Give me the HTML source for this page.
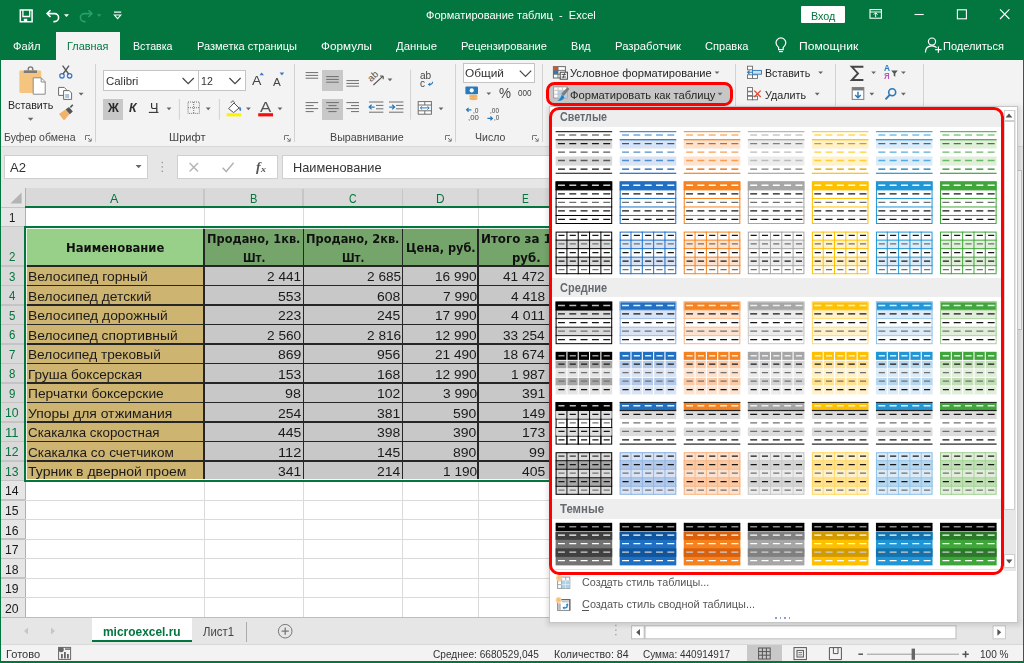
<!DOCTYPE html><html lang="ru"><head><meta charset="utf-8"><title>Форматирование таблиц - Excel</title>
<style>

html,body{margin:0;padding:0;}
body{width:1024px;height:663px;overflow:hidden;background:#fff;position:relative;font-family:"Liberation Sans",sans-serif;}
.a{position:absolute;box-sizing:border-box;}
.t{position:absolute;white-space:pre;transform-origin:0 50%;display:block;}
svg{overflow:visible;}

#t0{left:426.00px;transform:scaleX(0.9692);}
#t1{left:811.30px;transform:scaleX(0.9143);}
#t2{left:12.50px;transform:scaleX(0.9644);}
#t3{left:66.50px;transform:scaleX(0.9402);}
#t4{left:132.50px;transform:scaleX(0.9166);}
#t5{left:196.50px;transform:scaleX(0.9507);}
#t6{left:321.00px;transform:scaleX(1.0108);}
#t7{left:396.00px;transform:scaleX(0.9787);}
#t8{left:461.00px;transform:scaleX(0.9606);}
#t9{left:571.00px;transform:scaleX(0.9293);}
#t10{left:614.50px;transform:scaleX(0.9762);}
#t11{left:704.50px;transform:scaleX(0.9564);}
#t12{left:798.80px;transform:scaleX(1.0440);}
#t13{left:942.50px;transform:scaleX(0.9527);}
#t14{left:4.00px;transform:scaleX(0.9404);}
#t15{left:169.00px;transform:scaleX(0.9915);}
#t16{left:329.50px;transform:scaleX(0.9582);}
#t17{left:475.00px;transform:scaleX(0.9414);}
#t18{left:8.30px;transform:scaleX(0.9195);}
#t19{left:105.70px;transform:scaleX(0.9860);}
#t20{left:200.80px;transform:scaleX(0.9143);}
#t21{left:108.00px;transform:scaleX(0.9640);}
#t22{left:129.20px;transform:scaleX(0.9967);}
#t23{left:149.60px;transform:scaleX(1.0163);}
#t24{left:251.80px;transform:scaleX(1.0355);}
#t25{left:273.40px;transform:scaleX(1.0251);}
#t26{left:260.20px;transform:scaleX(1.1655);}
#t27{left:419.60px;transform:scaleX(0.9873);}
#t28{left:420.00px;transform:scaleX(0.9816);}
#t29{left:465.10px;transform:scaleX(1.0221);}
#t30{left:498.60px;transform:scaleX(0.9242);}
#t31{left:518.00px;transform:scaleX(0.9481);}
#t32{left:473.40px;transform:scaleX(0.8393);}
#t33{left:468.20px;transform:scaleX(0.9708);}
#t34{left:490.40px;transform:scaleX(0.8090);}
#t35{left:494.20px;transform:scaleX(0.7794);}
#t36{left:570.30px;transform:scaleX(0.9614);}
#t37{left:570.30px;transform:scaleX(0.9639);}
#t38{left:764.90px;transform:scaleX(0.9195);}
#t39{left:764.90px;transform:scaleX(0.9262);}
#t40{left:883.60px;transform:scaleX(0.9435);}
#t41{left:883.80px;transform:scaleX(0.8849);}
#t42{left:9.50px;transform:scaleX(1.0557);}
#t43{left:292.50px;transform:scaleX(1.0314);}
#t44{left:256.20px;transform:scaleX(1.1109);}
#t45{left:261.00px;transform:scaleX(1.1111);}
#t46{left:110.40px;transform:scaleX(0.9993);}
#t47{left:249.90px;transform:scaleX(0.8803);}
#t48{left:349.00px;transform:scaleX(0.8343);}
#t49{left:435.90px;transform:scaleX(0.9441);}
#t50{left:521.80px;transform:scaleX(0.8089);}
#t51{left:9.00px;transform:scaleX(0.8715);}
#t52{left:9.00px;transform:scaleX(0.8715);}
#t53{left:9.00px;transform:scaleX(0.8715);}
#t54{left:9.00px;transform:scaleX(0.8715);}
#t55{left:9.00px;transform:scaleX(0.8715);}
#t56{left:9.00px;transform:scaleX(0.8715);}
#t57{left:9.00px;transform:scaleX(0.8715);}
#t58{left:9.00px;transform:scaleX(0.8715);}
#t59{left:9.00px;transform:scaleX(0.8715);}
#t60{left:5.40px;transform:scaleX(0.9269);}
#t61{left:5.40px;transform:scaleX(0.9925);}
#t62{left:5.40px;transform:scaleX(0.9269);}
#t63{left:5.40px;transform:scaleX(0.9269);}
#t64{left:5.40px;transform:scaleX(0.9269);}
#t65{left:5.40px;transform:scaleX(0.9269);}
#t66{left:5.40px;transform:scaleX(0.9269);}
#t67{left:5.40px;transform:scaleX(0.9269);}
#t68{left:5.40px;transform:scaleX(0.9269);}
#t69{left:5.40px;transform:scaleX(0.9269);}
#t70{left:5.40px;transform:scaleX(0.9269);}
#t71{left:65.90px;transform:scaleX(0.9539);}
#t72{left:206.70px;transform:scaleX(0.9328);}
#t73{left:242.50px;transform:scaleX(0.8374);}
#t74{left:306.30px;transform:scaleX(0.9328);}
#t75{left:341.90px;transform:scaleX(0.8374);}
#t76{left:405.90px;transform:scaleX(0.9292);}
#t77{left:480.90px;transform:scaleX(0.9757);}
#t78{left:511.50px;transform:scaleX(0.9593);}
#t79{left:27.70px;transform:scaleX(1.0222);}
#t80{left:267.10px;transform:scaleX(1.0050);}
#t81{left:366.50px;transform:scaleX(1.0050);}
#t82{left:435.05px;transform:scaleX(1.0017);}
#t83{left:503.45px;transform:scaleX(1.0017);}
#t84{left:27.70px;transform:scaleX(1.0165);}
#t85{left:277.95px;transform:scaleX(1.0292);}
#t86{left:377.35px;transform:scaleX(1.0292);}
#t87{left:442.50px;transform:scaleX(1.0050);}
#t88{left:510.90px;transform:scaleX(1.0050);}
#t89{left:27.70px;transform:scaleX(1.0207);}
#t90{left:277.95px;transform:scaleX(1.0292);}
#t91{left:377.35px;transform:scaleX(1.0292);}
#t92{left:435.05px;transform:scaleX(1.0017);}
#t93{left:510.90px;transform:scaleX(1.0359);}
#t94{left:27.70px;transform:scaleX(1.0147);}
#t95{left:267.10px;transform:scaleX(1.0050);}
#t96{left:366.50px;transform:scaleX(1.0050);}
#t97{left:435.05px;transform:scaleX(1.0017);}
#t98{left:503.45px;transform:scaleX(1.0017);}
#t99{left:27.70px;transform:scaleX(1.0050);}
#t100{left:277.95px;transform:scaleX(1.0292);}
#t101{left:377.35px;transform:scaleX(1.0292);}
#t102{left:435.05px;transform:scaleX(1.0017);}
#t103{left:503.45px;transform:scaleX(1.0017);}
#t104{left:27.70px;transform:scaleX(0.9985);}
#t105{left:277.95px;transform:scaleX(1.0292);}
#t106{left:377.35px;transform:scaleX(1.0292);}
#t107{left:435.05px;transform:scaleX(1.0017);}
#t108{left:510.90px;transform:scaleX(1.0050);}
#t109{left:27.70px;transform:scaleX(1.0153);}
#t110{left:285.40px;transform:scaleX(1.0512);}
#t111{left:377.35px;transform:scaleX(1.0292);}
#t112{left:442.50px;transform:scaleX(1.0050);}
#t113{left:521.75px;transform:scaleX(1.0292);}
#t114{left:27.70px;transform:scaleX(1.0222);}
#t115{left:277.95px;transform:scaleX(1.0292);}
#t116{left:377.35px;transform:scaleX(1.0292);}
#t117{left:453.35px;transform:scaleX(1.0292);}
#t118{left:521.75px;transform:scaleX(1.0292);}
#t119{left:27.70px;transform:scaleX(0.9822);}
#t120{left:277.95px;transform:scaleX(1.0292);}
#t121{left:377.35px;transform:scaleX(1.0292);}
#t122{left:453.35px;transform:scaleX(1.0292);}
#t123{left:521.75px;transform:scaleX(1.0292);}
#t124{left:27.70px;transform:scaleX(0.9987);}
#t125{left:277.95px;transform:scaleX(1.0774);}
#t126{left:377.35px;transform:scaleX(1.0292);}
#t127{left:453.35px;transform:scaleX(1.0292);}
#t128{left:529.20px;transform:scaleX(1.0512);}
#t129{left:27.70px;transform:scaleX(1.0318);}
#t130{left:277.95px;transform:scaleX(1.0292);}
#t131{left:377.35px;transform:scaleX(1.0292);}
#t132{left:442.50px;transform:scaleX(1.0050);}
#t133{left:521.75px;transform:scaleX(1.0292);}
#t134{left:102.50px;transform:scaleX(0.9474);}
#t135{left:203.30px;transform:scaleX(0.9319);}
#t136{left:6.30px;transform:scaleX(0.9900);}
#t137{left:433.10px;transform:scaleX(0.9044);}
#t138{left:553.50px;transform:scaleX(0.9473);}
#t139{left:642.50px;transform:scaleX(0.8935);}
#t140{left:979.50px;transform:scaleX(0.9012);}
#t141{left:560.10px;transform:scaleX(0.8923);}
#t142{left:559.90px;transform:scaleX(0.9148);}
#t143{left:560.30px;transform:scaleX(0.9504);}
#t144{left:581.50px;transform:scaleX(0.9484);}
#t145{left:581.50px;transform:scaleX(0.9578);}
</style></head><body>
<div class="a " style="left:0.00px;top:0.00px;width:1024.00px;height:59.70px;background:#03763f;"></div>
<div class="a " style="left:0.00px;top:59.70px;width:1024.00px;height:86.00px;background:#f3f3f3;"></div>
<div class="a " style="left:0.00px;top:145.50px;width:1024.00px;height:1.00px;background:#d6d6d6;"></div>
<div class="a " style="left:0.00px;top:146.50px;width:1024.00px;height:41.70px;background:#e6e6e6;"></div>
<svg class="a" style="left:0.00px;top:0.00px;" width="140" height="32" viewBox="0 0 140 32">
<g fill="none" stroke="#fff" stroke-width="1.5">
<path d="M20.300 10h11.800v11.800h-11.800z"/><path d="M22.900 10v6.500h6.800v-6.500" stroke-width="1.300"/>
<path d="M50.500 10.200l-3.400 3.400 3.400 3.400" stroke-width="1.600"/><path d="M47.400 13.600h7.200a4 4 0 0 1 0 8h-1.200" stroke-width="1.600"/>
<g stroke="#27a06c"><path d="M88.500 10.200l3.400 3.400-3.400 3.400" stroke-width="1.600"/><path d="M91.600 13.600h-7.200a4 4 0 0 0 0 8h1.200" stroke-width="1.600"/></g>
<path d="M114 12.100h7.200" stroke-width="1.200"/>
</g>
<rect x="23.800" y="18.800" width="3.400" height="2.800" fill="#fff"/>
<path d="M64 14.200h5l-2.500 2.800z" fill="#fff"/><path d="M97 14.200h4.400l-2.200 2.600z" fill="#27a06c"/>
<path d="M114.400 15h6.400l-3.200 3.600z" fill="none" stroke="#fff" stroke-width="1.100"/>
</svg>
<span class="t" id="t0" style="top:9.46px;font-size:11.4px;line-height:13.68px;color:#fff;font-family:'Liberation Sans', sans-serif;font-weight:normal;">Форматирование таблиц  -  Excel</span>
<div class="a " style="left:801.00px;top:6.00px;width:44.00px;height:17.20px;background:#fff;border-radius:1px;"></div>
<span class="t" id="t1" style="top:8.52px;font-size:11.8px;line-height:14.16px;color:#03763f;font-family:'Liberation Sans', sans-serif;font-weight:normal;">Вход</span>
<svg class="a" style="left:860.00px;top:0.00px;" width="164" height="32" viewBox="0 0 164 32">
<g fill="none" stroke="#fff" stroke-width="1.1">
<rect x="10" y="9.6" width="11.4" height="8.6"/><path d="M10 12h11.4M15.7 17v-4M13.8 14.6l1.9-1.9 1.9 1.9" stroke-width="1"/>
<path d="M54.5 14.5h9.2"/>
<rect x="97.4" y="9.8" width="9" height="9"/>
<path d="M140 9.4l9.4 9.6M149.4 9.4L140 19"/>
</g>
</svg>
<div class="a " style="left:55.70px;top:31.70px;width:64.10px;height:28.20px;background:#f3f3f3;"></div>
<span class="t" id="t2" style="top:38.84px;font-size:11.6px;line-height:13.92px;color:#fff;font-family:'Liberation Sans', sans-serif;font-weight:normal;">Файл</span>
<span class="t" id="t3" style="top:38.84px;font-size:11.6px;line-height:13.92px;color:#03763f;font-family:'Liberation Sans', sans-serif;font-weight:normal;">Главная</span>
<span class="t" id="t4" style="top:38.84px;font-size:11.6px;line-height:13.92px;color:#fff;font-family:'Liberation Sans', sans-serif;font-weight:normal;">Вставка</span>
<span class="t" id="t5" style="top:38.84px;font-size:11.6px;line-height:13.92px;color:#fff;font-family:'Liberation Sans', sans-serif;font-weight:normal;">Разметка страницы</span>
<span class="t" id="t6" style="top:38.84px;font-size:11.6px;line-height:13.92px;color:#fff;font-family:'Liberation Sans', sans-serif;font-weight:normal;">Формулы</span>
<span class="t" id="t7" style="top:38.84px;font-size:11.6px;line-height:13.92px;color:#fff;font-family:'Liberation Sans', sans-serif;font-weight:normal;">Данные</span>
<span class="t" id="t8" style="top:38.84px;font-size:11.6px;line-height:13.92px;color:#fff;font-family:'Liberation Sans', sans-serif;font-weight:normal;">Рецензирование</span>
<span class="t" id="t9" style="top:38.84px;font-size:11.6px;line-height:13.92px;color:#fff;font-family:'Liberation Sans', sans-serif;font-weight:normal;">Вид</span>
<span class="t" id="t10" style="top:38.84px;font-size:11.6px;line-height:13.92px;color:#fff;font-family:'Liberation Sans', sans-serif;font-weight:normal;">Разработчик</span>
<span class="t" id="t11" style="top:38.84px;font-size:11.6px;line-height:13.92px;color:#fff;font-family:'Liberation Sans', sans-serif;font-weight:normal;">Справка</span>
<span class="t" id="t12" style="top:38.84px;font-size:11.6px;line-height:13.92px;color:#fff;font-family:'Liberation Sans', sans-serif;font-weight:normal;">Помощник</span>
<span class="t" id="t13" style="top:38.84px;font-size:11.6px;line-height:13.92px;color:#fff;font-family:'Liberation Sans', sans-serif;font-weight:normal;">Поделиться</span>
<svg class="a" style="left:770.00px;top:32.00px;" width="250" height="28" viewBox="0 0 250 28">
<g fill="none" stroke="#fff" stroke-width="1.2">
<path d="M8.6 15.4c-1.6-1.2-2.6-2.6-2.6-4.6a4.9 4.9 0 0 1 9.8 0c0 2-1 3.4-2.6 4.6v2.2H8.6z"/><path d="M9 19.6h3.8"/>
<circle cx="162" cy="9.6" r="3.6"/><path d="M155.4 20.4c0-4 2.6-6.6 6.6-6.6 2 0 3.4.6 4.6 1.8"/><path d="M168.4 14.4v6.4M165.2 17.6h6.4"/>
</g>
</svg>
<div class="a " style="left:95.00px;top:63.50px;width:1.00px;height:78.00px;background:#d2d2d2;"></div>
<div class="a " style="left:294.40px;top:63.50px;width:1.00px;height:78.00px;background:#d2d2d2;"></div>
<div class="a " style="left:454.60px;top:63.50px;width:1.00px;height:78.00px;background:#d2d2d2;"></div>
<div class="a " style="left:541.80px;top:63.50px;width:1.00px;height:78.00px;background:#d2d2d2;"></div>
<div class="a " style="left:734.60px;top:63.50px;width:1.00px;height:78.00px;background:#d2d2d2;"></div>
<div class="a " style="left:834.60px;top:63.50px;width:1.00px;height:78.00px;background:#d2d2d2;"></div>
<div class="a " style="left:923.40px;top:63.50px;width:1.00px;height:78.00px;background:#d2d2d2;"></div>
<span class="t" id="t14" style="top:130.88px;font-size:11.2px;line-height:13.44px;color:#444;font-family:'Liberation Sans', sans-serif;font-weight:normal;">Буфер обмена</span>
<span class="t" id="t15" style="top:130.88px;font-size:11.2px;line-height:13.44px;color:#444;font-family:'Liberation Sans', sans-serif;font-weight:normal;">Шрифт</span>
<span class="t" id="t16" style="top:130.88px;font-size:11.2px;line-height:13.44px;color:#444;font-family:'Liberation Sans', sans-serif;font-weight:normal;">Выравнивание</span>
<span class="t" id="t17" style="top:130.88px;font-size:11.2px;line-height:13.44px;color:#444;font-family:'Liberation Sans', sans-serif;font-weight:normal;">Число</span>
<svg class="a" style="left:84.50px;top:134.50px;" width="7" height="7" viewBox="0 0 7 7">
<path d="M.5 5V.5H5M3 3l3 3M6.2 3.4v2.8H3.4" fill="none" stroke="#777" stroke-width="1"/>
</svg>
<svg class="a" style="left:284.00px;top:134.50px;" width="7" height="7" viewBox="0 0 7 7">
<path d="M.5 5V.5H5M3 3l3 3M6.2 3.4v2.8H3.4" fill="none" stroke="#777" stroke-width="1"/>
</svg>
<svg class="a" style="left:444.50px;top:134.50px;" width="7" height="7" viewBox="0 0 7 7">
<path d="M.5 5V.5H5M3 3l3 3M6.2 3.4v2.8H3.4" fill="none" stroke="#777" stroke-width="1"/>
</svg>
<svg class="a" style="left:531.50px;top:134.50px;" width="7" height="7" viewBox="0 0 7 7">
<path d="M.5 5V.5H5M3 3l3 3M6.2 3.4v2.8H3.4" fill="none" stroke="#777" stroke-width="1"/>
</svg>
<svg class="a" style="left:0.00px;top:60.00px;" width="95" height="80" viewBox="0 0 95 80">
<rect x="19.400" y="10.400" width="21.800" height="22.600" rx="1.400" fill="#f5c47f"/>
<rect x="23.800" y="10.400" width="13.200" height="2.600" fill="#7a7a7a"/><path d="M28.200 10.600v-1.400a2.300 2.300 0 0 1 4.600 0v1.400" fill="none" stroke="#7a7a7a" stroke-width="1.400"/>
<path d="M33.200 17.800h8l4 4v12.400h-12z" fill="#fff" stroke="#8a8a8a" stroke-width="1"/>
<path d="M41.200 18v4h4" fill="none" stroke="#8a8a8a" stroke-width="1"/>
<path d="M27.800 57.800h5.600l-2.800 3z" fill="#666"/>
<g fill="none" stroke="#3f78c4" stroke-width="1.3"><circle cx="62" cy="15.8" r="2.2"/><circle cx="69.6" cy="15.8" r="2.2"/></g>
<path d="M62.6 5.6l6 8.4M69 5.6l-6 8.4" stroke="#555" stroke-width="1.3" fill="none"/>
<g fill="#fff" stroke="#6a6a6a" stroke-width="1"><path d="M58.6 27.4h5.6l2 2v6h-7.6z"/><path d="M63.6 30.6h5.6l2.4 2.4v6.4h-8z"/></g>
<path d="M65.2 35h4M65.2 37h4" stroke="#3f78c4" stroke-width="0.9"/>
<path d="M78.6 32.8h5l-2.5 2.8z" fill="#666"/>
<path d="M59 54l6.4-4.4 4 4.6-5.4 6.2z" fill="#f2b366"/><path d="M65.6 49.6l3.4-2.6 3.8 4.4-3 2.8z" fill="#555"/><path d="M70.4 47.4l2.4-2.6" stroke="#555" stroke-width="1.6"/>
</svg>
<span class="t" id="t18" style="top:98.04px;font-size:11.6px;line-height:13.92px;color:#262626;font-family:'Liberation Sans', sans-serif;font-weight:normal;">Вставить</span>
<div class="a " style="left:103.00px;top:70.00px;width:95.80px;height:20.60px;background:#fff;border:1px solid #c4c4c4;"></div>
<div class="a " style="left:198.20px;top:70.00px;width:47.60px;height:20.60px;background:#fff;border:1px solid #c4c4c4;"></div>
<span class="t" id="t19" style="top:73.64px;font-size:11.6px;line-height:13.92px;color:#333;font-family:'Liberation Sans', sans-serif;font-weight:normal;">Calibri</span>
<span class="t" id="t20" style="top:73.64px;font-size:11.6px;line-height:13.92px;color:#333;font-family:'Liberation Sans', sans-serif;font-weight:normal;">12</span>
<div class="a " style="left:103.00px;top:98.60px;width:20.20px;height:21.00px;background:#c8c8c8;"></div>
<span class="t" id="t21" style="top:101.16px;font-size:12.4px;line-height:14.88px;color:#262626;font-family:'Liberation Sans', sans-serif;font-weight:bold;">Ж</span>
<span class="t" id="t22" style="top:101.16px;font-size:12.4px;line-height:14.88px;color:#333;font-family:'Liberation Sans', sans-serif;font-weight:bold;font-style:italic;">К</span>
<span class="t" id="t23" style="top:100.76px;font-size:12.4px;line-height:14.88px;color:#333;font-family:'Liberation Sans', sans-serif;font-weight:normal;">Ч</span>
<svg class="a" style="left:100.00px;top:60.00px;" width="200" height="80" viewBox="0 0 200 80">
<g fill="none" stroke="#444" stroke-width="1.2"><path d="M82.6 18l5.6 5.6 5.6-5.6"/><path d="M129.4 18l5.6 5.6 5.6-5.6"/></g>
<path d="M48.8 52.4h9.6" stroke="#333" stroke-width="1.1"/>
<path d="M66.6 47.6h4.8l-2.4 2.6z" fill="#666"/>
<path d="M79.4 39v20.6" stroke="#d2d2d2" stroke-width="1"/>
<g stroke="#777" stroke-width="1" fill="none" stroke-dasharray="1 1"><rect x="88" y="42" width="11.4" height="11.4"/><path d="M93.7 42v11.4M88 47.7h11.4"/></g>
<path d="M105.8 47.6h4.8l-2.4 2.6z" fill="#666"/>
<path d="M119.4 39v20.6" stroke="#d2d2d2" stroke-width="1"/>
<path d="M128.6 48.6l5.4-5.6 5 5-5.4 4.6z" fill="#fff" stroke="#555" stroke-width="1"/><path d="M131 42.8c.6-2.4 3.6-2.4 3.4.6" fill="none" stroke="#555" stroke-width="1"/>
<path d="M139.6 46.4c1.6 1.4 2.2 3 1 4.6-1.4-.4-2-2.6-1-4.6z" fill="#3f78c4"/>
<rect x="126.6" y="53.2" width="14.6" height="3.2" fill="#fff200"/>
<path d="M146 47.6h4.8l-2.4 2.6z" fill="#666"/>
<rect x="158.2" y="53.2" width="14.8" height="3.2" fill="#f80d0d"/>
<path d="M177.6 47.6h4.8l-2.4 2.6z" fill="#666"/>
<path d="M159.400 15.200l2.300-2.800 2.300 2.800z" fill="#3f78c4"/>
<path d="M179.600 12.600h4.600l-2.300 2.800z" fill="#3f78c4"/>
</svg>
<span class="t" id="t24" style="top:73.44px;font-size:13.6px;line-height:16.32px;color:#444;font-family:'Liberation Sans', sans-serif;font-weight:normal;">A</span>
<span class="t" id="t25" style="top:75.76px;font-size:11.4px;line-height:13.68px;color:#444;font-family:'Liberation Sans', sans-serif;font-weight:normal;">A</span>
<span class="t" id="t26" style="top:98.76px;font-size:14.4px;line-height:17.28px;color:#555;font-family:'Liberation Sans', sans-serif;font-weight:normal;">A</span>
<div class="a " style="left:322.40px;top:69.60px;width:20.20px;height:21.00px;background:#c8c8c8;"></div>
<div class="a " style="left:322.40px;top:98.60px;width:20.20px;height:21.00px;background:#c8c8c8;"></div>
<svg class="a" style="left:300.00px;top:60.00px;" width="160" height="80" viewBox="0 0 160 80">
<g stroke="#6e6e6e" stroke-width="1" fill="none">
<path d="M5.600 12.600h12.600M5.600 15.400h12.600M5.600 18.200h12.600"/>
<path d="M26.200 16.600h12.600M26.200 19.400h12.600M26.200 22.200h12.600"/>
<path d="M46.400 20.600h12.600M46.400 23.400h12.600M46.400 26.200h12.600"/>
<path d="M5.600 42.600h12.600M5.600 45.600h8M5.600 48.600h12.600M5.600 51.600h8"/>
<path d="M26.200 42.600h12.600M28.400 45.600h8.200M26.200 48.600h12.600M28.400 51.600h8.200"/>
<path d="M46.400 42.600h12.600M51 45.600h8M46.400 48.600h12.600M51 51.600h8"/>
<path d="M69 42h14.400M76 45.400h7.400M76 48.800h7.400M69 52.200h14.400"/>
<path d="M89 42h14.400M96 45.400h7.400M96 48.800h7.400M89 52.200h14.400"/>
</g>
<g stroke="#2a7ab9" stroke-width="1.3" fill="none"><path d="M74.600 47.100h-5.200M71.600 44.800l-2.400 2.300 2.400 2.300"/><path d="M89.200 47.100h5.200M92.200 44.800l2.400 2.300-2.400 2.300"/></g>
<text x="71" y="22.200" font-family="Liberation Sans, sans-serif" font-size="9.600" fill="#555" transform="rotate(-42 71 22.200)">ab</text>
<path d="M73.400 25l9.600-8.800M83.200 16v3.200M83.200 16h-3.200" stroke="#555" stroke-width="1.100" fill="none"/>
<path d="M87.600 18.600h4.800l-2.400 2.600z" fill="#666"/>
<path d="M110.600 9.600v50" stroke="#d2d2d2" stroke-width="1"/>
<g stroke="#6e6e6e" stroke-width="1" fill="#fff"><rect x="118.200" y="41.600" width="13.200" height="12.600"/><path d="M118.200 45h13.200M118.200 50.800h13.200M124.800 41.600v3.400M124.800 50.800v3.400" fill="none"/></g>
<path d="M120.400 47.900h8.800M122.200 46.200l-1.800 1.700 1.800 1.700M127.400 46.200l1.800 1.700-1.800 1.700" stroke="#2a7ab9" stroke-width="1" fill="none"/>
<path d="M138.600 47.600h4.800l-2.400 2.600z" fill="#666"/>
<path d="M129.400 24.400c2.200.2 3.200-1 3.200-2.600" stroke="#2a7ab9" stroke-width="1.1" fill="none"/><path d="M127.800 24.400l2.400-1.800v3.600z" fill="#2a7ab9"/>
</svg>
<span class="t" id="t27" style="top:70.28px;font-size:10.2px;line-height:12.24px;color:#444;font-family:'Liberation Sans', sans-serif;font-weight:normal;">ab</span>
<span class="t" id="t28" style="top:77.68px;font-size:10.2px;line-height:12.24px;color:#444;font-family:'Liberation Sans', sans-serif;font-weight:normal;">c</span>
<div class="a " style="left:463.20px;top:62.60px;width:71.40px;height:20.60px;background:#fff;border:1px solid #c4c4c4;"></div>
<span class="t" id="t29" style="top:66.44px;font-size:11.6px;line-height:13.92px;color:#333;font-family:'Liberation Sans', sans-serif;font-weight:normal;">Общий</span>
<span class="t" id="t30" style="top:85.44px;font-size:14.6px;line-height:17.52px;color:#444;font-family:'Liberation Sans', sans-serif;font-weight:normal;">%</span>
<span class="t" id="t31" style="top:88.44px;font-size:8.6px;line-height:10.32px;color:#444;font-family:'Liberation Sans', sans-serif;font-weight:normal;">000</span>
<svg class="a" style="left:460.00px;top:60.00px;" width="90" height="80" viewBox="0 0 90 80">
<path d="M59.800 10.600l5.700 5.700 5.700-5.700" fill="none" stroke="#444" stroke-width="1.200"/>
<rect x="5.400" y="26.600" width="12.600" height="7.600" rx="1" fill="#2a7ab9"/><circle cx="11.700" cy="30.400" r="2.100" fill="#fff"/>
<ellipse cx="13.400" cy="36.200" rx="4.200" ry="1.700" fill="#f2b366"/><ellipse cx="13.400" cy="38.600" rx="4.200" ry="1.700" fill="#f2b366"/>
<path d="M26.400 32.400h4.800l-2.400 2.600z" fill="#666"/>
<g stroke="#2a7ab9" stroke-width="1.200" fill="none"><path d="M11.400 49.800h-4.800M8.600 47.900l-2 1.900 2 1.900"/><path d="M27.400 58.400h5M30.400 56.500l2 1.900-2 1.900"/></g>
</svg>
<span class="t" id="t32" style="top:106.40px;font-size:8px;line-height:9.60px;color:#444;font-family:'Liberation Sans', sans-serif;font-weight:normal;">,0</span>
<span class="t" id="t33" style="top:113.40px;font-size:8px;line-height:9.60px;color:#444;font-family:'Liberation Sans', sans-serif;font-weight:normal;">,00</span>
<span class="t" id="t34" style="top:106.40px;font-size:8px;line-height:9.60px;color:#444;font-family:'Liberation Sans', sans-serif;font-weight:normal;">,00</span>
<span class="t" id="t35" style="top:113.40px;font-size:8px;line-height:9.60px;color:#444;font-family:'Liberation Sans', sans-serif;font-weight:normal;">,0</span>
<span class="t" id="t36" style="top:66.24px;font-size:11.6px;line-height:13.92px;color:#262626;font-family:'Liberation Sans', sans-serif;font-weight:normal;">Условное форматирование</span>
<div class="a " style="left:548.40px;top:84.20px;width:182.60px;height:19.20px;background:#c6c6c6;border-radius:5px;"></div>
<span class="t" id="t37" style="top:87.64px;font-size:11.6px;line-height:13.92px;color:#262626;font-family:'Liberation Sans', sans-serif;font-weight:normal;">Форматировать как таблицу</span>
<svg class="a" style="left:545.00px;top:60.00px;" width="200" height="50" viewBox="0 0 200 50">
<rect x="8.400" y="6.600" width="12" height="11.400" fill="#fff" stroke="#6a6a6a" stroke-width="1"/>
<rect x="8.400" y="6.600" width="4.600" height="3.800" fill="#d6552a"/><rect x="8.400" y="10.400" width="4.600" height="3.800" fill="#2a7ab9"/>
<path d="M13 6.600v11.400M8.400 10.400h12M8.400 14.200h12" stroke="#6a6a6a" stroke-width=".9" fill="none"/>
<rect x="15.200" y="12.200" width="7.200" height="7" fill="#fff" stroke="#444" stroke-width="1"/><path d="M16.600 14.400h4.400M16.600 17h4.400M19.600 13.200l-1.600 5" stroke="#444" stroke-width=".9"/>
<path d="M169.600 11.400h4.800l-2.400 2.600z" fill="#666"/>
<rect x="8.600" y="26.800" width="13.400" height="11.200" fill="#fdfdfd" stroke="#9a9a9a" stroke-width="1"/>
<rect x="13" y="30.600" width="8.800" height="7.400" fill="#a9d3f2"/>
<path d="M8.600 30.400h13.400M8.600 34.200h13.400M13 26.800v11.200M17.400 26.800v11.200" stroke="#c2c2c2" stroke-width=".9" fill="none"/>
<path d="M22.600 27.200l1.800 1.800-5.600 7-2.600-2.200z" fill="#7d7d7d"/>
<path d="M12.400 40.400c1.400-.2 2.400-1.400 3.200-3.200l1.200-2.400 2.800 2.400-1.600 2c-1.400 1.400-3.400 1.800-5.600 1.200z" fill="#1f82c8"/>
<path d="M172.600 32.800h4.800l-2.400 2.600z" fill="#666"/>
</svg>
<span class="t" id="t38" style="top:66.24px;font-size:11.6px;line-height:13.92px;color:#262626;font-family:'Liberation Sans', sans-serif;font-weight:normal;">Вставить</span>
<span class="t" id="t39" style="top:87.64px;font-size:11.6px;line-height:13.92px;color:#262626;font-family:'Liberation Sans', sans-serif;font-weight:normal;">Удалить</span>
<svg class="a" style="left:740.00px;top:60.00px;" width="100" height="50" viewBox="0 0 100 50">
<g transform="translate(2.900 0)"><g fill="#fff" stroke="#6a6a6a" stroke-width=".9"><rect x="4.600" y="6.200" width="5" height="3.600"/><rect x="4.600" y="14.800" width="5" height="3.600"/><rect x="9.600" y="14.800" width="5" height="3.600"/><rect x="9.600" y="10.400" width="9" height="3.800" fill="#cfe0f2" stroke="#2a7ab9"/></g>
<path d="M4.600 12.300h4.600M6.600 10.600l-1.900 1.700 1.900 1.700" stroke="#2a7ab9" stroke-width="1.100" fill="none"/>
<g fill="#fff" stroke="#6a6a6a" stroke-width=".9"><rect x="4.600" y="27.600" width="5" height="3.600"/><rect x="4.600" y="36.200" width="5" height="3.600"/><rect x="9.600" y="36.200" width="5" height="3.600"/><rect x="4.600" y="31.800" width="5" height="3.800"/></g>
<path d="M11.400 30.600l6.400 6.400M17.800 30.600l-6.400 6.400" stroke="#e0452c" stroke-width="1.300"/>
</g><path d="M78.200 11.400h4.800l-2.400 2.600z" fill="#666"/><path d="M74.800 32.800h4.800l-2.400 2.600z" fill="#666"/>
</svg>
<svg class="a" style="left:840.00px;top:60.00px;" width="90" height="50" viewBox="0 0 90 50">
<path d="M23.400 6.800h-11.600l6.200 6.600-6.200 6.600h11.600" fill="none" stroke="#444" stroke-width="1.900"/>
<path d="M31.200 11.400h4.800l-2.400 2.600z" fill="#666"/>
<rect x="12.200" y="27.600" width="11.600" height="11.800" fill="#fff" stroke="#7a7a7a" stroke-width="1"/><rect x="12.200" y="27.600" width="11.600" height="2.800" fill="#7a7a7a"/>
<path d="M18 31.800v5.800M15.200 35l2.800 2.800 2.800-2.800" stroke="#2a7ab9" stroke-width="1.500" fill="none"/>
<path d="M29.400 32.800h4.800l-2.400 2.600z" fill="#666"/>
<path d="M51.200 10.600h6.600l-2.500 2.900v3.300l-1.600-1.100v-2.200z" fill="#555"/>
<path d="M61 11.400h4.800l-2.400 2.600z" fill="#666"/>
<circle cx="52.200" cy="32.200" r="3.500" fill="none" stroke="#2a7ab9" stroke-width="1.600"/><path d="M49.700 34.900l-4.200 4.400" stroke="#2a7ab9" stroke-width="1.900"/>
<path d="M61 32.800h4.800l-2.400 2.600z" fill="#666"/>
</svg>
<span class="t" id="t40" style="top:62.52px;font-size:8.8px;line-height:10.56px;color:#2a7ab9;font-family:'Liberation Sans', sans-serif;font-weight:bold;">А</span>
<span class="t" id="t41" style="top:70.92px;font-size:8.8px;line-height:10.56px;color:#b05cb0;font-family:'Liberation Sans', sans-serif;font-weight:bold;">Я</span>
<div class="a " style="left:4.40px;top:155.30px;width:143.80px;height:23.60px;background:#fff;border:1px solid #cfcfcf;"></div>
<div class="a " style="left:176.80px;top:155.30px;width:101.40px;height:23.60px;background:#fff;border:1px solid #cfcfcf;"></div>
<div class="a " style="left:281.60px;top:155.30px;width:742.40px;height:23.60px;background:#fff;border:1px solid #cfcfcf;"></div>
<span class="t" id="t42" style="top:160.76px;font-size:12.4px;line-height:14.88px;color:#333;font-family:'Liberation Sans', sans-serif;font-weight:normal;">A2</span>
<span class="t" id="t43" style="top:160.56px;font-size:12.4px;line-height:14.88px;color:#333;font-family:'Liberation Sans', sans-serif;font-weight:normal;">Наименование</span>
<svg class="a" style="left:130.00px;top:150.00px;" width="160" height="36" viewBox="0 0 160 36">
<path d="M5.600 15h6l-3 3.200z" fill="#666"/>
<g fill="#999"><rect x="31.600" y="11.800" width="1.400" height="1.400"/><rect x="31.600" y="16.200" width="1.400" height="1.400"/><rect x="31.600" y="20.600" width="1.400" height="1.400"/></g>
<path d="M59.600 13l8.400 8.600M68 13l-8.400 8.600" stroke="#b4b4b4" stroke-width="1.400" fill="none"/>
<path d="M92.600 17.800l3.600 3.800 7.400-8.800" stroke="#b4b4b4" stroke-width="1.500" fill="none"/>
</svg>
<span class="t" id="t44" style="top:159.76px;font-size:12.4px;line-height:14.88px;color:#555;font-family:'Liberation Serif', serif;font-weight:bold;font-style:italic;">f</span>
<span class="t" id="t45" style="top:164.00px;font-size:9px;line-height:10.80px;color:#555;font-family:'Liberation Serif', serif;font-weight:bold;font-style:italic;">x</span>
<div class="a " style="left:0.00px;top:188.20px;width:1024.00px;height:19.20px;background:#e6e6e6;"></div>
<div class="a " style="left:25.20px;top:188.20px;width:548.80px;height:19.20px;background:#d9d9d9;"></div>
<div class="a " style="left:0.00px;top:207.40px;width:25.20px;height:409.71px;background:#e6e6e6;"></div>
<div class="a " style="left:0.00px;top:226.91px;width:25.20px;height:253.63px;background:#d9d9d9;"></div>
<svg class="a" style="left:0.00px;top:188.20px;" width="26" height="18" viewBox="0 0 26 18">
<path d="M21.600 4.400v11.200H10.400z" fill="#b4b4b4"/>
</svg>
<div class="a " style="left:203.50px;top:189.20px;width:1.00px;height:427.91px;background:#dadada;"></div>
<div class="a " style="left:302.70px;top:189.20px;width:1.00px;height:427.91px;background:#dadada;"></div>
<div class="a " style="left:402.10px;top:189.20px;width:1.00px;height:427.91px;background:#dadada;"></div>
<div class="a " style="left:477.50px;top:189.20px;width:1.00px;height:427.91px;background:#dadada;"></div>
<div class="a " style="left:573.50px;top:189.20px;width:1.00px;height:427.91px;background:#dadada;"></div>
<div class="a " style="left:24.90px;top:188.20px;width:1.00px;height:428.91px;background:#b0b0b0;"></div>
<div class="a " style="left:0.00px;top:206.90px;width:1024.00px;height:1.00px;background:#c4c4c4;"></div>
<div class="a " style="left:0.00px;top:226.41px;width:1024.00px;height:1.00px;background:#dadada;"></div>
<div class="a " style="left:0.00px;top:265.43px;width:1024.00px;height:1.00px;background:#dadada;"></div>
<div class="a " style="left:0.00px;top:284.94px;width:1024.00px;height:1.00px;background:#dadada;"></div>
<div class="a " style="left:0.00px;top:304.45px;width:1024.00px;height:1.00px;background:#dadada;"></div>
<div class="a " style="left:0.00px;top:323.96px;width:1024.00px;height:1.00px;background:#dadada;"></div>
<div class="a " style="left:0.00px;top:343.47px;width:1024.00px;height:1.00px;background:#dadada;"></div>
<div class="a " style="left:0.00px;top:362.98px;width:1024.00px;height:1.00px;background:#dadada;"></div>
<div class="a " style="left:0.00px;top:382.49px;width:1024.00px;height:1.00px;background:#dadada;"></div>
<div class="a " style="left:0.00px;top:402.00px;width:1024.00px;height:1.00px;background:#dadada;"></div>
<div class="a " style="left:0.00px;top:421.51px;width:1024.00px;height:1.00px;background:#dadada;"></div>
<div class="a " style="left:0.00px;top:441.02px;width:1024.00px;height:1.00px;background:#dadada;"></div>
<div class="a " style="left:0.00px;top:460.53px;width:1024.00px;height:1.00px;background:#dadada;"></div>
<div class="a " style="left:0.00px;top:480.04px;width:1024.00px;height:1.00px;background:#dadada;"></div>
<div class="a " style="left:0.00px;top:499.55px;width:1024.00px;height:1.00px;background:#dadada;"></div>
<div class="a " style="left:0.00px;top:519.06px;width:1024.00px;height:1.00px;background:#dadada;"></div>
<div class="a " style="left:0.00px;top:538.57px;width:1024.00px;height:1.00px;background:#dadada;"></div>
<div class="a " style="left:0.00px;top:558.08px;width:1024.00px;height:1.00px;background:#dadada;"></div>
<div class="a " style="left:0.00px;top:577.59px;width:1024.00px;height:1.00px;background:#dadada;"></div>
<div class="a " style="left:0.00px;top:597.10px;width:1024.00px;height:1.00px;background:#dadada;"></div>
<div class="a " style="left:0.00px;top:616.61px;width:1024.00px;height:1.00px;background:#dadada;"></div>
<div class="a " style="left:203.20px;top:189.20px;width:1.60px;height:16.80px;background:#c6c6c6;"></div>
<div class="a " style="left:302.40px;top:189.20px;width:1.60px;height:16.80px;background:#c6c6c6;"></div>
<div class="a " style="left:401.80px;top:189.20px;width:1.60px;height:16.80px;background:#c6c6c6;"></div>
<div class="a " style="left:477.20px;top:189.20px;width:1.60px;height:16.80px;background:#c6c6c6;"></div>
<div class="a " style="left:573.20px;top:189.20px;width:1.60px;height:16.80px;background:#c6c6c6;"></div>
<div class="a " style="left:1.20px;top:226.31px;width:23.60px;height:1.20px;background:#c4c4c4;"></div>
<div class="a " style="left:1.20px;top:265.33px;width:23.60px;height:1.20px;background:#c4c4c4;"></div>
<div class="a " style="left:1.20px;top:284.84px;width:23.60px;height:1.20px;background:#c4c4c4;"></div>
<div class="a " style="left:1.20px;top:304.35px;width:23.60px;height:1.20px;background:#c4c4c4;"></div>
<div class="a " style="left:1.20px;top:323.86px;width:23.60px;height:1.20px;background:#c4c4c4;"></div>
<div class="a " style="left:1.20px;top:343.37px;width:23.60px;height:1.20px;background:#c4c4c4;"></div>
<div class="a " style="left:1.20px;top:362.88px;width:23.60px;height:1.20px;background:#c4c4c4;"></div>
<div class="a " style="left:1.20px;top:382.39px;width:23.60px;height:1.20px;background:#c4c4c4;"></div>
<div class="a " style="left:1.20px;top:401.90px;width:23.60px;height:1.20px;background:#c4c4c4;"></div>
<div class="a " style="left:1.20px;top:421.41px;width:23.60px;height:1.20px;background:#c4c4c4;"></div>
<div class="a " style="left:1.20px;top:440.92px;width:23.60px;height:1.20px;background:#c4c4c4;"></div>
<div class="a " style="left:1.20px;top:460.43px;width:23.60px;height:1.20px;background:#c4c4c4;"></div>
<div class="a " style="left:1.20px;top:479.94px;width:23.60px;height:1.20px;background:#c4c4c4;"></div>
<div class="a " style="left:1.20px;top:499.45px;width:23.60px;height:1.20px;background:#c4c4c4;"></div>
<div class="a " style="left:1.20px;top:518.96px;width:23.60px;height:1.20px;background:#c4c4c4;"></div>
<div class="a " style="left:1.20px;top:538.47px;width:23.60px;height:1.20px;background:#c4c4c4;"></div>
<div class="a " style="left:1.20px;top:557.98px;width:23.60px;height:1.20px;background:#c4c4c4;"></div>
<div class="a " style="left:1.20px;top:577.49px;width:23.60px;height:1.20px;background:#c4c4c4;"></div>
<div class="a " style="left:1.20px;top:597.00px;width:23.60px;height:1.20px;background:#c4c4c4;"></div>
<div class="a " style="left:1.20px;top:616.51px;width:23.60px;height:1.20px;background:#c4c4c4;"></div>
<span class="t" id="t46" style="top:191.64px;font-size:12.6px;line-height:15.12px;color:#03763f;font-family:'Liberation Sans', sans-serif;font-weight:normal;">A</span>
<span class="t" id="t47" style="top:191.64px;font-size:12.6px;line-height:15.12px;color:#03763f;font-family:'Liberation Sans', sans-serif;font-weight:normal;">B</span>
<span class="t" id="t48" style="top:191.64px;font-size:12.6px;line-height:15.12px;color:#03763f;font-family:'Liberation Sans', sans-serif;font-weight:normal;">C</span>
<span class="t" id="t49" style="top:191.64px;font-size:12.6px;line-height:15.12px;color:#03763f;font-family:'Liberation Sans', sans-serif;font-weight:normal;">D</span>
<span class="t" id="t50" style="top:191.64px;font-size:12.6px;line-height:15.12px;color:#03763f;font-family:'Liberation Sans', sans-serif;font-weight:normal;">E</span>
<span class="t" id="t51" style="top:210.34px;font-size:13.2px;line-height:15.84px;color:#1a1a1a;font-family:'Liberation Sans', sans-serif;font-weight:normal;">1</span>
<span class="t" id="t52" style="top:249.41px;font-size:13.2px;line-height:15.84px;color:#03763f;font-family:'Liberation Sans', sans-serif;font-weight:normal;">2</span>
<span class="t" id="t53" style="top:268.87px;font-size:13.2px;line-height:15.84px;color:#03763f;font-family:'Liberation Sans', sans-serif;font-weight:normal;">3</span>
<span class="t" id="t54" style="top:288.38px;font-size:13.2px;line-height:15.84px;color:#03763f;font-family:'Liberation Sans', sans-serif;font-weight:normal;">4</span>
<span class="t" id="t55" style="top:307.89px;font-size:13.2px;line-height:15.84px;color:#03763f;font-family:'Liberation Sans', sans-serif;font-weight:normal;">5</span>
<span class="t" id="t56" style="top:327.40px;font-size:13.2px;line-height:15.84px;color:#03763f;font-family:'Liberation Sans', sans-serif;font-weight:normal;">6</span>
<span class="t" id="t57" style="top:346.91px;font-size:13.2px;line-height:15.84px;color:#03763f;font-family:'Liberation Sans', sans-serif;font-weight:normal;">7</span>
<span class="t" id="t58" style="top:366.42px;font-size:13.2px;line-height:15.84px;color:#03763f;font-family:'Liberation Sans', sans-serif;font-weight:normal;">8</span>
<span class="t" id="t59" style="top:385.93px;font-size:13.2px;line-height:15.84px;color:#03763f;font-family:'Liberation Sans', sans-serif;font-weight:normal;">9</span>
<span class="t" id="t60" style="top:405.44px;font-size:13.2px;line-height:15.84px;color:#03763f;font-family:'Liberation Sans', sans-serif;font-weight:normal;">10</span>
<span class="t" id="t61" style="top:424.94px;font-size:13.2px;line-height:15.84px;color:#03763f;font-family:'Liberation Sans', sans-serif;font-weight:normal;">11</span>
<span class="t" id="t62" style="top:444.45px;font-size:13.2px;line-height:15.84px;color:#03763f;font-family:'Liberation Sans', sans-serif;font-weight:normal;">12</span>
<span class="t" id="t63" style="top:463.97px;font-size:13.2px;line-height:15.84px;color:#03763f;font-family:'Liberation Sans', sans-serif;font-weight:normal;">13</span>
<span class="t" id="t64" style="top:483.48px;font-size:13.2px;line-height:15.84px;color:#1a1a1a;font-family:'Liberation Sans', sans-serif;font-weight:normal;">14</span>
<span class="t" id="t65" style="top:502.99px;font-size:13.2px;line-height:15.84px;color:#1a1a1a;font-family:'Liberation Sans', sans-serif;font-weight:normal;">15</span>
<span class="t" id="t66" style="top:522.50px;font-size:13.2px;line-height:15.84px;color:#1a1a1a;font-family:'Liberation Sans', sans-serif;font-weight:normal;">16</span>
<span class="t" id="t67" style="top:542.01px;font-size:13.2px;line-height:15.84px;color:#1a1a1a;font-family:'Liberation Sans', sans-serif;font-weight:normal;">17</span>
<span class="t" id="t68" style="top:561.52px;font-size:13.2px;line-height:15.84px;color:#1a1a1a;font-family:'Liberation Sans', sans-serif;font-weight:normal;">18</span>
<span class="t" id="t69" style="top:581.03px;font-size:13.2px;line-height:15.84px;color:#1a1a1a;font-family:'Liberation Sans', sans-serif;font-weight:normal;">19</span>
<span class="t" id="t70" style="top:600.54px;font-size:13.2px;line-height:15.84px;color:#1a1a1a;font-family:'Liberation Sans', sans-serif;font-weight:normal;">20</span>
<div class="a " style="left:25.20px;top:226.91px;width:178.80px;height:39.02px;background:#98d08a;"></div>
<div class="a " style="left:204.00px;top:226.91px;width:370.00px;height:39.02px;background:#75a56b;"></div>
<div class="a " style="left:25.20px;top:265.93px;width:178.80px;height:214.61px;background:#ceb471;"></div>
<div class="a " style="left:204.00px;top:265.93px;width:370.00px;height:214.61px;background:#c8c8c8;"></div>
<div class="a " style="left:203.35px;top:226.91px;width:1.30px;height:253.63px;background:#262626;"></div>
<div class="a " style="left:302.55px;top:226.91px;width:1.30px;height:253.63px;background:#262626;"></div>
<div class="a " style="left:401.95px;top:226.91px;width:1.30px;height:253.63px;background:#262626;"></div>
<div class="a " style="left:477.35px;top:226.91px;width:1.30px;height:253.63px;background:#262626;"></div>
<div class="a " style="left:25.20px;top:265.28px;width:548.80px;height:1.30px;background:#262626;"></div>
<div class="a " style="left:25.20px;top:284.79px;width:548.80px;height:1.30px;background:#262626;"></div>
<div class="a " style="left:25.20px;top:304.30px;width:548.80px;height:1.30px;background:#262626;"></div>
<div class="a " style="left:25.20px;top:323.81px;width:548.80px;height:1.30px;background:#262626;"></div>
<div class="a " style="left:25.20px;top:343.32px;width:548.80px;height:1.30px;background:#262626;"></div>
<div class="a " style="left:25.20px;top:362.83px;width:548.80px;height:1.30px;background:#262626;"></div>
<div class="a " style="left:25.20px;top:382.34px;width:548.80px;height:1.30px;background:#262626;"></div>
<div class="a " style="left:25.20px;top:401.85px;width:548.80px;height:1.30px;background:#262626;"></div>
<div class="a " style="left:25.20px;top:421.36px;width:548.80px;height:1.30px;background:#262626;"></div>
<div class="a " style="left:25.20px;top:440.87px;width:548.80px;height:1.30px;background:#262626;"></div>
<div class="a " style="left:25.20px;top:460.38px;width:548.80px;height:1.30px;background:#262626;"></div>
<div class="a " style="left:25.70px;top:227.61px;width:548.00px;height:1.10px;background:rgba(255,255,255,.8);"></div>
<div class="a " style="left:25.70px;top:227.61px;width:1.20px;height:252.33px;background:rgba(255,255,255,.8);"></div>
<div class="a " style="left:25.70px;top:478.74px;width:548.00px;height:1.20px;background:rgba(255,255,255,.9);"></div>
<div class="a " style="left:24.00px;top:225.81px;width:550.00px;height:1.80px;background:#03763f;"></div>
<div class="a " style="left:24.00px;top:479.94px;width:550.00px;height:2.20px;background:#03763f;"></div>
<div class="a " style="left:24.00px;top:225.81px;width:1.70px;height:256.33px;background:#03763f;"></div>
<div class="a " style="left:24.90px;top:206.00px;width:549.10px;height:1.70px;background:#03763f;"></div>
<span class="t" id="t71" style="top:240.88px;font-size:12.2px;line-height:14.64px;color:#111;font-family:'DejaVu Sans', 'Liberation Sans', sans-serif;font-weight:bold;">Наименование</span>
<span class="t" id="t72" style="top:231.68px;font-size:12.2px;line-height:14.64px;color:#111;font-family:'DejaVu Sans', 'Liberation Sans', sans-serif;font-weight:bold;">Продано, 1кв.</span>
<span class="t" id="t73" style="top:250.88px;font-size:12.2px;line-height:14.64px;color:#111;font-family:'DejaVu Sans', 'Liberation Sans', sans-serif;font-weight:bold;">Шт.</span>
<span class="t" id="t74" style="top:231.68px;font-size:12.2px;line-height:14.64px;color:#111;font-family:'DejaVu Sans', 'Liberation Sans', sans-serif;font-weight:bold;">Продано, 2кв.</span>
<span class="t" id="t75" style="top:250.88px;font-size:12.2px;line-height:14.64px;color:#111;font-family:'DejaVu Sans', 'Liberation Sans', sans-serif;font-weight:bold;">Шт.</span>
<span class="t" id="t76" style="top:240.88px;font-size:12.2px;line-height:14.64px;color:#111;font-family:'DejaVu Sans', 'Liberation Sans', sans-serif;font-weight:bold;">Цена, руб.</span>
<span class="t" id="t77" style="top:231.68px;font-size:12.2px;line-height:14.64px;color:#111;font-family:'DejaVu Sans', 'Liberation Sans', sans-serif;font-weight:bold;">Итого за 1кв.</span>
<span class="t" id="t78" style="top:250.88px;font-size:12.2px;line-height:14.64px;color:#111;font-family:'DejaVu Sans', 'Liberation Sans', sans-serif;font-weight:bold;">руб.</span>
<span class="t" id="t79" style="top:269.12px;font-size:13.6px;line-height:16.32px;color:#1a1a1a;font-family:'Liberation Sans', sans-serif;font-weight:normal;">Велосипед горный</span>
<span class="t" id="t80" style="top:269.12px;font-size:13.6px;line-height:16.32px;color:#1a1a1a;font-family:'Liberation Sans', sans-serif;font-weight:normal;">2 441</span>
<span class="t" id="t81" style="top:269.12px;font-size:13.6px;line-height:16.32px;color:#1a1a1a;font-family:'Liberation Sans', sans-serif;font-weight:normal;">2 685</span>
<span class="t" id="t82" style="top:269.12px;font-size:13.6px;line-height:16.32px;color:#1a1a1a;font-family:'Liberation Sans', sans-serif;font-weight:normal;">16 990</span>
<span class="t" id="t83" style="top:269.12px;font-size:13.6px;line-height:16.32px;color:#1a1a1a;font-family:'Liberation Sans', sans-serif;font-weight:normal;">41 472</span>
<span class="t" id="t84" style="top:288.64px;font-size:13.6px;line-height:16.32px;color:#1a1a1a;font-family:'Liberation Sans', sans-serif;font-weight:normal;">Велосипед детский</span>
<span class="t" id="t85" style="top:288.64px;font-size:13.6px;line-height:16.32px;color:#1a1a1a;font-family:'Liberation Sans', sans-serif;font-weight:normal;">553</span>
<span class="t" id="t86" style="top:288.64px;font-size:13.6px;line-height:16.32px;color:#1a1a1a;font-family:'Liberation Sans', sans-serif;font-weight:normal;">608</span>
<span class="t" id="t87" style="top:288.64px;font-size:13.6px;line-height:16.32px;color:#1a1a1a;font-family:'Liberation Sans', sans-serif;font-weight:normal;">7 990</span>
<span class="t" id="t88" style="top:288.64px;font-size:13.6px;line-height:16.32px;color:#1a1a1a;font-family:'Liberation Sans', sans-serif;font-weight:normal;">4 418</span>
<span class="t" id="t89" style="top:308.15px;font-size:13.6px;line-height:16.32px;color:#1a1a1a;font-family:'Liberation Sans', sans-serif;font-weight:normal;">Велосипед дорожный</span>
<span class="t" id="t90" style="top:308.15px;font-size:13.6px;line-height:16.32px;color:#1a1a1a;font-family:'Liberation Sans', sans-serif;font-weight:normal;">223</span>
<span class="t" id="t91" style="top:308.15px;font-size:13.6px;line-height:16.32px;color:#1a1a1a;font-family:'Liberation Sans', sans-serif;font-weight:normal;">245</span>
<span class="t" id="t92" style="top:308.15px;font-size:13.6px;line-height:16.32px;color:#1a1a1a;font-family:'Liberation Sans', sans-serif;font-weight:normal;">17 990</span>
<span class="t" id="t93" style="top:308.15px;font-size:13.6px;line-height:16.32px;color:#1a1a1a;font-family:'Liberation Sans', sans-serif;font-weight:normal;">4 011</span>
<span class="t" id="t94" style="top:327.66px;font-size:13.6px;line-height:16.32px;color:#1a1a1a;font-family:'Liberation Sans', sans-serif;font-weight:normal;">Велосипед спортивный</span>
<span class="t" id="t95" style="top:327.66px;font-size:13.6px;line-height:16.32px;color:#1a1a1a;font-family:'Liberation Sans', sans-serif;font-weight:normal;">2 560</span>
<span class="t" id="t96" style="top:327.66px;font-size:13.6px;line-height:16.32px;color:#1a1a1a;font-family:'Liberation Sans', sans-serif;font-weight:normal;">2 816</span>
<span class="t" id="t97" style="top:327.66px;font-size:13.6px;line-height:16.32px;color:#1a1a1a;font-family:'Liberation Sans', sans-serif;font-weight:normal;">12 990</span>
<span class="t" id="t98" style="top:327.66px;font-size:13.6px;line-height:16.32px;color:#1a1a1a;font-family:'Liberation Sans', sans-serif;font-weight:normal;">33 254</span>
<span class="t" id="t99" style="top:347.17px;font-size:13.6px;line-height:16.32px;color:#1a1a1a;font-family:'Liberation Sans', sans-serif;font-weight:normal;">Велосипед трековый</span>
<span class="t" id="t100" style="top:347.17px;font-size:13.6px;line-height:16.32px;color:#1a1a1a;font-family:'Liberation Sans', sans-serif;font-weight:normal;">869</span>
<span class="t" id="t101" style="top:347.17px;font-size:13.6px;line-height:16.32px;color:#1a1a1a;font-family:'Liberation Sans', sans-serif;font-weight:normal;">956</span>
<span class="t" id="t102" style="top:347.17px;font-size:13.6px;line-height:16.32px;color:#1a1a1a;font-family:'Liberation Sans', sans-serif;font-weight:normal;">21 490</span>
<span class="t" id="t103" style="top:347.17px;font-size:13.6px;line-height:16.32px;color:#1a1a1a;font-family:'Liberation Sans', sans-serif;font-weight:normal;">18 674</span>
<span class="t" id="t104" style="top:366.68px;font-size:13.6px;line-height:16.32px;color:#1a1a1a;font-family:'Liberation Sans', sans-serif;font-weight:normal;">Груша боксерская</span>
<span class="t" id="t105" style="top:366.68px;font-size:13.6px;line-height:16.32px;color:#1a1a1a;font-family:'Liberation Sans', sans-serif;font-weight:normal;">153</span>
<span class="t" id="t106" style="top:366.68px;font-size:13.6px;line-height:16.32px;color:#1a1a1a;font-family:'Liberation Sans', sans-serif;font-weight:normal;">168</span>
<span class="t" id="t107" style="top:366.68px;font-size:13.6px;line-height:16.32px;color:#1a1a1a;font-family:'Liberation Sans', sans-serif;font-weight:normal;">12 990</span>
<span class="t" id="t108" style="top:366.68px;font-size:13.6px;line-height:16.32px;color:#1a1a1a;font-family:'Liberation Sans', sans-serif;font-weight:normal;">1 987</span>
<span class="t" id="t109" style="top:386.19px;font-size:13.6px;line-height:16.32px;color:#1a1a1a;font-family:'Liberation Sans', sans-serif;font-weight:normal;">Перчатки боксерские</span>
<span class="t" id="t110" style="top:386.19px;font-size:13.6px;line-height:16.32px;color:#1a1a1a;font-family:'Liberation Sans', sans-serif;font-weight:normal;">98</span>
<span class="t" id="t111" style="top:386.19px;font-size:13.6px;line-height:16.32px;color:#1a1a1a;font-family:'Liberation Sans', sans-serif;font-weight:normal;">102</span>
<span class="t" id="t112" style="top:386.19px;font-size:13.6px;line-height:16.32px;color:#1a1a1a;font-family:'Liberation Sans', sans-serif;font-weight:normal;">3 990</span>
<span class="t" id="t113" style="top:386.19px;font-size:13.6px;line-height:16.32px;color:#1a1a1a;font-family:'Liberation Sans', sans-serif;font-weight:normal;">391</span>
<span class="t" id="t114" style="top:405.69px;font-size:13.6px;line-height:16.32px;color:#1a1a1a;font-family:'Liberation Sans', sans-serif;font-weight:normal;">Упоры для отжимания</span>
<span class="t" id="t115" style="top:405.69px;font-size:13.6px;line-height:16.32px;color:#1a1a1a;font-family:'Liberation Sans', sans-serif;font-weight:normal;">254</span>
<span class="t" id="t116" style="top:405.69px;font-size:13.6px;line-height:16.32px;color:#1a1a1a;font-family:'Liberation Sans', sans-serif;font-weight:normal;">381</span>
<span class="t" id="t117" style="top:405.69px;font-size:13.6px;line-height:16.32px;color:#1a1a1a;font-family:'Liberation Sans', sans-serif;font-weight:normal;">590</span>
<span class="t" id="t118" style="top:405.69px;font-size:13.6px;line-height:16.32px;color:#1a1a1a;font-family:'Liberation Sans', sans-serif;font-weight:normal;">149</span>
<span class="t" id="t119" style="top:425.20px;font-size:13.6px;line-height:16.32px;color:#1a1a1a;font-family:'Liberation Sans', sans-serif;font-weight:normal;">Скакалка скоростная</span>
<span class="t" id="t120" style="top:425.20px;font-size:13.6px;line-height:16.32px;color:#1a1a1a;font-family:'Liberation Sans', sans-serif;font-weight:normal;">445</span>
<span class="t" id="t121" style="top:425.20px;font-size:13.6px;line-height:16.32px;color:#1a1a1a;font-family:'Liberation Sans', sans-serif;font-weight:normal;">398</span>
<span class="t" id="t122" style="top:425.20px;font-size:13.6px;line-height:16.32px;color:#1a1a1a;font-family:'Liberation Sans', sans-serif;font-weight:normal;">390</span>
<span class="t" id="t123" style="top:425.20px;font-size:13.6px;line-height:16.32px;color:#1a1a1a;font-family:'Liberation Sans', sans-serif;font-weight:normal;">173</span>
<span class="t" id="t124" style="top:444.71px;font-size:13.6px;line-height:16.32px;color:#1a1a1a;font-family:'Liberation Sans', sans-serif;font-weight:normal;">Скакалка со счетчиком</span>
<span class="t" id="t125" style="top:444.71px;font-size:13.6px;line-height:16.32px;color:#1a1a1a;font-family:'Liberation Sans', sans-serif;font-weight:normal;">112</span>
<span class="t" id="t126" style="top:444.71px;font-size:13.6px;line-height:16.32px;color:#1a1a1a;font-family:'Liberation Sans', sans-serif;font-weight:normal;">145</span>
<span class="t" id="t127" style="top:444.71px;font-size:13.6px;line-height:16.32px;color:#1a1a1a;font-family:'Liberation Sans', sans-serif;font-weight:normal;">890</span>
<span class="t" id="t128" style="top:444.71px;font-size:13.6px;line-height:16.32px;color:#1a1a1a;font-family:'Liberation Sans', sans-serif;font-weight:normal;">99</span>
<span class="t" id="t129" style="top:464.23px;font-size:13.6px;line-height:16.32px;color:#1a1a1a;font-family:'Liberation Sans', sans-serif;font-weight:normal;">Турник в дверной проем</span>
<span class="t" id="t130" style="top:464.23px;font-size:13.6px;line-height:16.32px;color:#1a1a1a;font-family:'Liberation Sans', sans-serif;font-weight:normal;">341</span>
<span class="t" id="t131" style="top:464.23px;font-size:13.6px;line-height:16.32px;color:#1a1a1a;font-family:'Liberation Sans', sans-serif;font-weight:normal;">214</span>
<span class="t" id="t132" style="top:464.23px;font-size:13.6px;line-height:16.32px;color:#1a1a1a;font-family:'Liberation Sans', sans-serif;font-weight:normal;">1 190</span>
<span class="t" id="t133" style="top:464.23px;font-size:13.6px;line-height:16.32px;color:#1a1a1a;font-family:'Liberation Sans', sans-serif;font-weight:normal;">405</span>
<div class="a " style="left:0.00px;top:617.11px;width:1024.00px;height:27.29px;background:#e6e6e6;"></div>
<div class="a " style="left:0.00px;top:616.61px;width:1024.00px;height:1.20px;background:#bdbdbd;"></div>
<div class="a " style="left:92.00px;top:617.71px;width:99.60px;height:24.20px;background:#fff;"></div>
<div class="a " style="left:92.00px;top:640.20px;width:99.60px;height:2.00px;background:#03763f;"></div>
<span class="t" id="t134" style="top:624.64px;font-size:12.6px;line-height:15.12px;color:#03763f;font-family:'Liberation Sans', sans-serif;font-weight:bold;">microexcel.ru</span>
<span class="t" id="t135" style="top:624.68px;font-size:12.2px;line-height:14.64px;color:#444;font-family:'Liberation Sans', sans-serif;font-weight:normal;">Лист1</span>
<div class="a " style="left:245.60px;top:622.00px;width:1.00px;height:20.00px;background:#ababab;"></div>
<svg class="a" style="left:0.00px;top:618.00px;" width="320" height="25" viewBox="0 0 320 25">
<path d="M28 9.600v6.800l-4-3.400z" fill="#c6c6c6"/><path d="M51 9.600v6.800l4-3.400z" fill="#c6c6c6"/>
<circle cx="285.200" cy="13.200" r="6.800" fill="none" stroke="#777" stroke-width="1"/><path d="M281.600 13.200h7.200M285.200 9.600v7.200" stroke="#777" stroke-width="1.300"/>
</svg>
<svg class="a" style="left:600.00px;top:618.00px;" width="424" height="25" viewBox="0 0 424 25">
<g fill="#9a9a9a"><rect x="15.200" y="6.800" width="1.300" height="1.300"/><rect x="15.200" y="11.400" width="1.300" height="1.300"/><rect x="15.200" y="16" width="1.300" height="1.300"/></g>
<rect x="31.600" y="7.800" width="12.600" height="13" fill="#fff" stroke="#bcbcbc" stroke-width="1"/><path d="M40 10.900v6.800l-3.800-3.400z" fill="#555"/>
<rect x="45" y="7.800" width="311" height="13" fill="#fff" stroke="#bcbcbc" stroke-width="1"/>
<rect x="393" y="7.800" width="12.400" height="13" fill="#fff" stroke="#c8c8c8" stroke-width="1"/><path d="M397.400 10.900v6.800l3.800-3.400z" fill="#555"/>
</svg>
<div class="a " style="left:1012.00px;top:146.50px;width:11.00px;height:472.00px;background:#e9e9e9;"></div>
<div class="a " style="left:1014.50px;top:170.00px;width:7.00px;height:160.00px;background:#fdfdfd;border:1px solid #c8c8c8;"></div>
<div class="a " style="left:0.00px;top:644.40px;width:1024.00px;height:18.60px;background:#f3f3f3;"></div>
<div class="a " style="left:0.00px;top:643.90px;width:1024.00px;height:1.00px;background:#d8d8d8;"></div>
<span class="t" id="t136" style="top:647.88px;font-size:11.2px;line-height:13.44px;color:#333;font-family:'Liberation Sans', sans-serif;font-weight:normal;">Готово</span>
<span class="t" id="t137" style="top:647.88px;font-size:11.2px;line-height:13.44px;color:#333;font-family:'Liberation Sans', sans-serif;font-weight:normal;">Среднее: 6680529,045</span>
<span class="t" id="t138" style="top:647.88px;font-size:11.2px;line-height:13.44px;color:#333;font-family:'Liberation Sans', sans-serif;font-weight:normal;">Количество: 84</span>
<span class="t" id="t139" style="top:647.88px;font-size:11.2px;line-height:13.44px;color:#333;font-family:'Liberation Sans', sans-serif;font-weight:normal;">Сумма: 440914917</span>
<span class="t" id="t140" style="top:647.88px;font-size:11.2px;line-height:13.44px;color:#333;font-family:'Liberation Sans', sans-serif;font-weight:normal;">100 %</span>
<div class="a " style="left:747.00px;top:644.60px;width:35.00px;height:16.20px;background:#c8c8c8;"></div>
<svg class="a" style="left:0.00px;top:643.00px;" width="1024" height="20" viewBox="0 0 1024 20">
<g fill="#666"><rect x="58.600" y="4.400" width="12" height="12" fill="none" stroke="#666" stroke-width="1"/><circle cx="61.200" cy="6.600" r="2.600"/><rect x="61" y="11" width="1.800" height="4.400"/><rect x="64" y="9" width="1.800" height="6.400"/><rect x="67" y="11" width="1.800" height="4.400"/><rect x="65" y="5.400" width="5" height="1.400"/></g>
<g fill="none" stroke="#555" stroke-width="1"><rect x="758.600" y="5" width="11.600" height="11"/><path d="M758.600 8.600h11.600M758.600 12.200h11.600M762.400 5v11M766.400 5v11"/>
<rect x="794" y="4.600" width="12.400" height="12"/><rect x="797" y="7.400" width="6.400" height="6.600"/><path d="M798.400 9.600h3.600M798.400 11.800h3.600" stroke-width=".8"/>
<path d="M829.400 4.600h12v12h-12z"/><path d="M833.400 4.600v6h4.600v-6" /></g>
<path d="M858.400 11.200h4.600" stroke="#555" stroke-width="1.500"/><path d="M867 11.200h92" stroke="#9a9a9a" stroke-width="1"/><rect x="911.600" y="5.600" width="3.400" height="11.200" fill="#666"/>
<path d="M962.400 11.200h6.400M965.600 8v6.400" stroke="#555" stroke-width="1.500"/>
</svg>
<div class="a " style="left:0.00px;top:31.00px;width:1.20px;height:632.00px;background:#03763f;"></div>
<div class="a " style="left:1022.80px;top:31.00px;width:1.20px;height:632.00px;background:#03763f;"></div>
<div class="a " style="left:0.00px;top:660.80px;width:1024.00px;height:2.20px;background:#03763f;"></div>
<div class="a " style="left:546.60px;top:106.00px;width:474.60px;height:520.40px;background:rgba(0,0,0,.10);border-radius:2px;filter:blur(2px);"></div>
<div class="a " style="left:548.60px;top:106.00px;width:469.60px;height:517.40px;background:#fff;border:1px solid #c6c6c6;"></div>
<div class="a " style="left:1004.00px;top:109.60px;width:11.60px;height:461.00px;background:#e8e8e8;"></div>
<div class="a " style="left:1003.60px;top:109.60px;width:11.60px;height:11.40px;background:#fff;border:1px solid #cfcfcf;"></div>
<div class="a " style="left:1003.60px;top:121.00px;width:11.60px;height:388.60px;background:#fff;border:1px solid #cfcfcf;"></div>
<div class="a " style="left:1003.60px;top:554.20px;width:11.60px;height:13.60px;background:#fff;border:1px solid #cfcfcf;"></div>
<svg class="a" style="left:1004.00px;top:106.00px;" width="14" height="470" viewBox="0 0 14 470">
<path d="M1.600 11.600h6.800l-3.400-4.200z" fill="#555"/><path d="M2 453.600h6.400l-3.200 3.800z" fill="#555"/>
</svg>
<div class="a " style="left:552.00px;top:110.00px;width:449.00px;height:17.00px;background:#eeeeee;"></div>
<span class="t" id="t141" style="top:109.60px;font-size:12px;line-height:14.40px;color:#646a70;font-family:'Liberation Sans', sans-serif;font-weight:bold;">Светлые</span>
<div class="a " style="left:552.00px;top:277.80px;width:449.00px;height:19.20px;background:#eeeeee;"></div>
<span class="t" id="t142" style="top:280.50px;font-size:12px;line-height:14.40px;color:#646a70;font-family:'Liberation Sans', sans-serif;font-weight:bold;">Средние</span>
<div class="a " style="left:552.00px;top:499.40px;width:449.00px;height:19.20px;background:#eeeeee;"></div>
<span class="t" id="t143" style="top:502.10px;font-size:12px;line-height:14.40px;color:#646a70;font-family:'Liberation Sans', sans-serif;font-weight:bold;">Темные</span>
<svg class="a" style="left:0;top:0;" width="1024" height="663" viewBox="0 0 1024 663">
<rect x="555.60" y="139.42" width="56.60" height="9.12" fill="#d9d9d9"/>
<rect x="555.60" y="156.46" width="56.60" height="9.12" fill="#d9d9d9"/>
<rect x="555.60" y="131.20" width="56.60" height="1.00" fill="#000"/>
<rect x="555.60" y="139.12" width="56.60" height="1.20" fill="#333"/>
<rect x="555.60" y="172.70" width="56.60" height="1.20" fill="#333"/>
<path d="M558.00 135.06h52.20" stroke="#7a7a7a" stroke-width="1.5" stroke-dasharray="6.92 4.40"/>
<path d="M558.00 143.58h52.20" stroke="#161616" stroke-width="1.2" stroke-dasharray="6.92 4.40"/>
<path d="M558.00 152.10h52.20" stroke="#5a5a5a" stroke-width="1.2" stroke-dasharray="6.92 4.40"/>
<path d="M558.00 160.62h52.20" stroke="#5a5a5a" stroke-width="1.5" stroke-dasharray="6.92 4.40"/>
<path d="M558.00 169.14h52.20" stroke="#161616" stroke-width="1.2" stroke-dasharray="6.92 4.40"/>
<rect x="619.67" y="139.42" width="56.60" height="9.12" fill="#d9e3f3"/>
<rect x="619.67" y="156.46" width="56.60" height="9.12" fill="#d9e3f3"/>
<rect x="619.67" y="131.20" width="56.60" height="1.00" fill="#1f6fc2"/>
<rect x="619.67" y="139.12" width="56.60" height="1.20" fill="#1f6fc2"/>
<rect x="619.67" y="172.70" width="56.60" height="1.20" fill="#1f6fc2"/>
<path d="M622.07 135.06h52.20" stroke="#74a6d9" stroke-width="1.5" stroke-dasharray="6.92 4.40"/>
<path d="M622.07 143.58h52.20" stroke="#1b5fa8" stroke-width="1.2" stroke-dasharray="6.92 4.40"/>
<path d="M622.07 152.10h52.20" stroke="#508fcf" stroke-width="1.2" stroke-dasharray="6.92 4.40"/>
<path d="M622.07 160.62h52.20" stroke="#508fcf" stroke-width="1.5" stroke-dasharray="6.92 4.40"/>
<path d="M622.07 169.14h52.20" stroke="#1b5fa8" stroke-width="1.2" stroke-dasharray="6.92 4.40"/>
<rect x="683.74" y="139.42" width="56.60" height="9.12" fill="#fde3cf"/>
<rect x="683.74" y="156.46" width="56.60" height="9.12" fill="#fde3cf"/>
<rect x="683.74" y="131.20" width="56.60" height="1.00" fill="#f5821f"/>
<rect x="683.74" y="139.12" width="56.60" height="1.20" fill="#f5821f"/>
<rect x="683.74" y="172.70" width="56.60" height="1.20" fill="#f5821f"/>
<path d="M686.14 135.06h52.20" stroke="#f9b274" stroke-width="1.5" stroke-dasharray="6.92 4.40"/>
<path d="M686.14 143.58h52.20" stroke="#d9660e" stroke-width="1.2" stroke-dasharray="6.92 4.40"/>
<path d="M686.14 152.10h52.20" stroke="#f79e50" stroke-width="1.2" stroke-dasharray="6.92 4.40"/>
<path d="M686.14 160.62h52.20" stroke="#f79e50" stroke-width="1.5" stroke-dasharray="6.92 4.40"/>
<path d="M686.14 169.14h52.20" stroke="#d9660e" stroke-width="1.2" stroke-dasharray="6.92 4.40"/>
<rect x="747.81" y="139.42" width="56.60" height="9.12" fill="#ececec"/>
<rect x="747.81" y="156.46" width="56.60" height="9.12" fill="#ececec"/>
<rect x="747.81" y="131.20" width="56.60" height="1.00" fill="#a6a6a6"/>
<rect x="747.81" y="139.12" width="56.60" height="1.20" fill="#a6a6a6"/>
<rect x="747.81" y="172.70" width="56.60" height="1.20" fill="#a6a6a6"/>
<path d="M750.21 135.06h52.20" stroke="#c8c8c8" stroke-width="1.5" stroke-dasharray="6.92 4.40"/>
<path d="M750.21 143.58h52.20" stroke="#7f7f7f" stroke-width="1.2" stroke-dasharray="6.92 4.40"/>
<path d="M750.21 152.10h52.20" stroke="#bababa" stroke-width="1.2" stroke-dasharray="6.92 4.40"/>
<path d="M750.21 160.62h52.20" stroke="#bababa" stroke-width="1.5" stroke-dasharray="6.92 4.40"/>
<path d="M750.21 169.14h52.20" stroke="#7f7f7f" stroke-width="1.2" stroke-dasharray="6.92 4.40"/>
<rect x="811.88" y="139.42" width="56.60" height="9.12" fill="#fff1c9"/>
<rect x="811.88" y="156.46" width="56.60" height="9.12" fill="#fff1c9"/>
<rect x="811.88" y="131.20" width="56.60" height="1.00" fill="#ffc000"/>
<rect x="811.88" y="139.12" width="56.60" height="1.20" fill="#ffc000"/>
<rect x="811.88" y="172.70" width="56.60" height="1.20" fill="#ffc000"/>
<path d="M814.28 135.06h52.20" stroke="#ffd861" stroke-width="1.5" stroke-dasharray="6.92 4.40"/>
<path d="M814.28 143.58h52.20" stroke="#d99e00" stroke-width="1.2" stroke-dasharray="6.92 4.40"/>
<path d="M814.28 152.10h52.20" stroke="#ffce38" stroke-width="1.2" stroke-dasharray="6.92 4.40"/>
<path d="M814.28 160.62h52.20" stroke="#ffce38" stroke-width="1.5" stroke-dasharray="6.92 4.40"/>
<path d="M814.28 169.14h52.20" stroke="#d99e00" stroke-width="1.2" stroke-dasharray="6.92 4.40"/>
<rect x="875.95" y="139.42" width="56.60" height="9.12" fill="#dcebf7"/>
<rect x="875.95" y="156.46" width="56.60" height="9.12" fill="#dcebf7"/>
<rect x="875.95" y="131.20" width="56.60" height="1.00" fill="#2196d6"/>
<rect x="875.95" y="139.12" width="56.60" height="1.20" fill="#2196d6"/>
<rect x="875.95" y="172.70" width="56.60" height="1.20" fill="#2196d6"/>
<path d="M878.35 135.06h52.20" stroke="#75bee6" stroke-width="1.5" stroke-dasharray="6.92 4.40"/>
<path d="M878.35 143.58h52.20" stroke="#1877b4" stroke-width="1.2" stroke-dasharray="6.92 4.40"/>
<path d="M878.35 152.10h52.20" stroke="#52addf" stroke-width="1.2" stroke-dasharray="6.92 4.40"/>
<path d="M878.35 160.62h52.20" stroke="#52addf" stroke-width="1.5" stroke-dasharray="6.92 4.40"/>
<path d="M878.35 169.14h52.20" stroke="#1877b4" stroke-width="1.2" stroke-dasharray="6.92 4.40"/>
<rect x="940.02" y="139.42" width="56.60" height="9.12" fill="#e1efda"/>
<rect x="940.02" y="156.46" width="56.60" height="9.12" fill="#e1efda"/>
<rect x="940.02" y="131.20" width="56.60" height="1.00" fill="#3fa63a"/>
<rect x="940.02" y="139.12" width="56.60" height="1.20" fill="#3fa63a"/>
<rect x="940.02" y="172.70" width="56.60" height="1.20" fill="#3fa63a"/>
<path d="M942.42 135.06h52.20" stroke="#88c885" stroke-width="1.5" stroke-dasharray="6.92 4.40"/>
<path d="M942.42 143.58h52.20" stroke="#2f8a2e" stroke-width="1.2" stroke-dasharray="6.92 4.40"/>
<path d="M942.42 152.10h52.20" stroke="#69ba65" stroke-width="1.2" stroke-dasharray="6.92 4.40"/>
<path d="M942.42 160.62h52.20" stroke="#69ba65" stroke-width="1.5" stroke-dasharray="6.92 4.40"/>
<path d="M942.42 169.14h52.20" stroke="#2f8a2e" stroke-width="1.2" stroke-dasharray="6.92 4.40"/>
<rect x="555.60" y="181.40" width="56.60" height="8.52" fill="#000000"/>
<rect x="556.10" y="181.90" width="55.60" height="41.60" fill="none" stroke="#000000" stroke-width="1.0"/>
<rect x="555.60" y="197.94" width="56.60" height="1.00" fill="#000000"/>
<rect x="555.60" y="206.46" width="56.60" height="1.00" fill="#000000"/>
<rect x="555.60" y="214.98" width="56.60" height="1.00" fill="#000000"/>
<rect x="555.60" y="189.42" width="56.60" height="1.00" fill="#000000"/>
<path d="M558.00 185.26h52.20" stroke="#cfcfcf" stroke-width="1.5" stroke-dasharray="6.92 4.40"/>
<path d="M558.00 193.78h52.20" stroke="#161616" stroke-width="1.25" stroke-dasharray="6.92 4.40"/>
<path d="M558.00 202.30h52.20" stroke="#707070" stroke-width="1.25" stroke-dasharray="6.92 4.40"/>
<path d="M558.00 210.82h52.20" stroke="#161616" stroke-width="1.25" stroke-dasharray="6.92 4.40"/>
<path d="M558.00 219.34h52.20" stroke="#161616" stroke-width="1.25" stroke-dasharray="6.92 4.40"/>
<rect x="619.67" y="181.40" width="56.60" height="8.52" fill="#1f6fc2"/>
<rect x="620.17" y="181.90" width="55.60" height="41.60" fill="none" stroke="#1f6fc2" stroke-width="1.0"/>
<rect x="619.67" y="197.94" width="56.60" height="1.00" fill="#1f6fc2"/>
<rect x="619.67" y="206.46" width="56.60" height="1.00" fill="#1f6fc2"/>
<rect x="619.67" y="214.98" width="56.60" height="1.00" fill="#1f6fc2"/>
<rect x="619.67" y="189.42" width="56.60" height="1.00" fill="#1f6fc2"/>
<path d="M622.07 185.26h52.20" stroke="#ffffff" stroke-width="1.5" stroke-dasharray="6.92 4.40"/>
<path d="M622.07 193.78h52.20" stroke="#161616" stroke-width="1.25" stroke-dasharray="6.92 4.40"/>
<path d="M622.07 202.30h52.20" stroke="#707070" stroke-width="1.25" stroke-dasharray="6.92 4.40"/>
<path d="M622.07 210.82h52.20" stroke="#161616" stroke-width="1.25" stroke-dasharray="6.92 4.40"/>
<path d="M622.07 219.34h52.20" stroke="#161616" stroke-width="1.25" stroke-dasharray="6.92 4.40"/>
<rect x="683.74" y="181.40" width="56.60" height="8.52" fill="#f5821f"/>
<rect x="684.24" y="181.90" width="55.60" height="41.60" fill="none" stroke="#f5821f" stroke-width="1.0"/>
<rect x="683.74" y="197.94" width="56.60" height="1.00" fill="#f5821f"/>
<rect x="683.74" y="206.46" width="56.60" height="1.00" fill="#f5821f"/>
<rect x="683.74" y="214.98" width="56.60" height="1.00" fill="#f5821f"/>
<rect x="683.74" y="189.42" width="56.60" height="1.00" fill="#f5821f"/>
<path d="M686.14 185.26h52.20" stroke="#ffffff" stroke-width="1.5" stroke-dasharray="6.92 4.40"/>
<path d="M686.14 193.78h52.20" stroke="#161616" stroke-width="1.25" stroke-dasharray="6.92 4.40"/>
<path d="M686.14 202.30h52.20" stroke="#707070" stroke-width="1.25" stroke-dasharray="6.92 4.40"/>
<path d="M686.14 210.82h52.20" stroke="#161616" stroke-width="1.25" stroke-dasharray="6.92 4.40"/>
<path d="M686.14 219.34h52.20" stroke="#161616" stroke-width="1.25" stroke-dasharray="6.92 4.40"/>
<rect x="747.81" y="181.40" width="56.60" height="8.52" fill="#a6a6a6"/>
<rect x="748.31" y="181.90" width="55.60" height="41.60" fill="none" stroke="#a6a6a6" stroke-width="1.0"/>
<rect x="747.81" y="197.94" width="56.60" height="1.00" fill="#a6a6a6"/>
<rect x="747.81" y="206.46" width="56.60" height="1.00" fill="#a6a6a6"/>
<rect x="747.81" y="214.98" width="56.60" height="1.00" fill="#a6a6a6"/>
<rect x="747.81" y="189.42" width="56.60" height="1.00" fill="#a6a6a6"/>
<path d="M750.21 185.26h52.20" stroke="#ffffff" stroke-width="1.5" stroke-dasharray="6.92 4.40"/>
<path d="M750.21 193.78h52.20" stroke="#161616" stroke-width="1.25" stroke-dasharray="6.92 4.40"/>
<path d="M750.21 202.30h52.20" stroke="#707070" stroke-width="1.25" stroke-dasharray="6.92 4.40"/>
<path d="M750.21 210.82h52.20" stroke="#161616" stroke-width="1.25" stroke-dasharray="6.92 4.40"/>
<path d="M750.21 219.34h52.20" stroke="#161616" stroke-width="1.25" stroke-dasharray="6.92 4.40"/>
<rect x="811.88" y="181.40" width="56.60" height="8.52" fill="#ffc000"/>
<rect x="812.38" y="181.90" width="55.60" height="41.60" fill="none" stroke="#ffc000" stroke-width="1.0"/>
<rect x="811.88" y="197.94" width="56.60" height="1.00" fill="#ffc000"/>
<rect x="811.88" y="206.46" width="56.60" height="1.00" fill="#ffc000"/>
<rect x="811.88" y="214.98" width="56.60" height="1.00" fill="#ffc000"/>
<rect x="811.88" y="189.42" width="56.60" height="1.00" fill="#ffc000"/>
<path d="M814.28 185.26h52.20" stroke="#ffffff" stroke-width="1.5" stroke-dasharray="6.92 4.40"/>
<path d="M814.28 193.78h52.20" stroke="#161616" stroke-width="1.25" stroke-dasharray="6.92 4.40"/>
<path d="M814.28 202.30h52.20" stroke="#707070" stroke-width="1.25" stroke-dasharray="6.92 4.40"/>
<path d="M814.28 210.82h52.20" stroke="#161616" stroke-width="1.25" stroke-dasharray="6.92 4.40"/>
<path d="M814.28 219.34h52.20" stroke="#161616" stroke-width="1.25" stroke-dasharray="6.92 4.40"/>
<rect x="875.95" y="181.40" width="56.60" height="8.52" fill="#2196d6"/>
<rect x="876.45" y="181.90" width="55.60" height="41.60" fill="none" stroke="#2196d6" stroke-width="1.0"/>
<rect x="875.95" y="197.94" width="56.60" height="1.00" fill="#2196d6"/>
<rect x="875.95" y="206.46" width="56.60" height="1.00" fill="#2196d6"/>
<rect x="875.95" y="214.98" width="56.60" height="1.00" fill="#2196d6"/>
<rect x="875.95" y="189.42" width="56.60" height="1.00" fill="#2196d6"/>
<path d="M878.35 185.26h52.20" stroke="#ffffff" stroke-width="1.5" stroke-dasharray="6.92 4.40"/>
<path d="M878.35 193.78h52.20" stroke="#161616" stroke-width="1.25" stroke-dasharray="6.92 4.40"/>
<path d="M878.35 202.30h52.20" stroke="#707070" stroke-width="1.25" stroke-dasharray="6.92 4.40"/>
<path d="M878.35 210.82h52.20" stroke="#161616" stroke-width="1.25" stroke-dasharray="6.92 4.40"/>
<path d="M878.35 219.34h52.20" stroke="#161616" stroke-width="1.25" stroke-dasharray="6.92 4.40"/>
<rect x="940.02" y="181.40" width="56.60" height="8.52" fill="#3fa63a"/>
<rect x="940.52" y="181.90" width="55.60" height="41.60" fill="none" stroke="#3fa63a" stroke-width="1.0"/>
<rect x="940.02" y="197.94" width="56.60" height="1.00" fill="#3fa63a"/>
<rect x="940.02" y="206.46" width="56.60" height="1.00" fill="#3fa63a"/>
<rect x="940.02" y="214.98" width="56.60" height="1.00" fill="#3fa63a"/>
<rect x="940.02" y="189.42" width="56.60" height="1.00" fill="#3fa63a"/>
<path d="M942.42 185.26h52.20" stroke="#ffffff" stroke-width="1.5" stroke-dasharray="6.92 4.40"/>
<path d="M942.42 193.78h52.20" stroke="#161616" stroke-width="1.25" stroke-dasharray="6.92 4.40"/>
<path d="M942.42 202.30h52.20" stroke="#707070" stroke-width="1.25" stroke-dasharray="6.92 4.40"/>
<path d="M942.42 210.82h52.20" stroke="#161616" stroke-width="1.25" stroke-dasharray="6.92 4.40"/>
<path d="M942.42 219.34h52.20" stroke="#161616" stroke-width="1.25" stroke-dasharray="6.92 4.40"/>
<rect x="555.60" y="240.12" width="56.60" height="8.52" fill="#d9d9d9"/>
<rect x="555.60" y="257.16" width="56.60" height="8.52" fill="#d9d9d9"/>
<rect x="556.10" y="232.10" width="55.60" height="41.60" fill="none" stroke="#000000" stroke-width="1.0"/>
<rect x="555.60" y="239.62" width="56.60" height="1.00" fill="#000000"/>
<rect x="555.60" y="248.14" width="56.60" height="1.00" fill="#000000"/>
<rect x="555.60" y="256.66" width="56.60" height="1.00" fill="#000000"/>
<rect x="555.60" y="265.18" width="56.60" height="1.00" fill="#000000"/>
<rect x="566.42" y="231.60" width="1.00" height="42.60" fill="#000000"/>
<rect x="577.74" y="231.60" width="1.00" height="42.60" fill="#000000"/>
<rect x="589.06" y="231.60" width="1.00" height="42.60" fill="#000000"/>
<rect x="600.38" y="231.60" width="1.00" height="42.60" fill="#000000"/>
<path d="M558.40 235.46h51.40" stroke="#161616" stroke-width="1.25" stroke-dasharray="6.12 5.20"/>
<path d="M558.40 243.98h51.40" stroke="#707070" stroke-width="1.25" stroke-dasharray="6.12 5.20"/>
<path d="M558.40 252.50h51.40" stroke="#161616" stroke-width="1.25" stroke-dasharray="6.12 5.20"/>
<path d="M558.40 261.02h51.40" stroke="#161616" stroke-width="1.25" stroke-dasharray="6.12 5.20"/>
<path d="M558.40 269.54h51.40" stroke="#707070" stroke-width="1.25" stroke-dasharray="6.12 5.20"/>
<rect x="619.67" y="240.12" width="56.60" height="8.52" fill="#d9e3f3"/>
<rect x="619.67" y="257.16" width="56.60" height="8.52" fill="#d9e3f3"/>
<rect x="620.17" y="232.10" width="55.60" height="41.60" fill="none" stroke="#1f6fc2" stroke-width="1.0"/>
<rect x="619.67" y="239.62" width="56.60" height="1.00" fill="#1f6fc2"/>
<rect x="619.67" y="248.14" width="56.60" height="1.00" fill="#1f6fc2"/>
<rect x="619.67" y="256.66" width="56.60" height="1.00" fill="#1f6fc2"/>
<rect x="619.67" y="265.18" width="56.60" height="1.00" fill="#1f6fc2"/>
<rect x="630.49" y="231.60" width="1.00" height="42.60" fill="#1f6fc2"/>
<rect x="641.81" y="231.60" width="1.00" height="42.60" fill="#1f6fc2"/>
<rect x="653.13" y="231.60" width="1.00" height="42.60" fill="#1f6fc2"/>
<rect x="664.45" y="231.60" width="1.00" height="42.60" fill="#1f6fc2"/>
<path d="M622.47 235.46h51.40" stroke="#161616" stroke-width="1.25" stroke-dasharray="6.12 5.20"/>
<path d="M622.47 243.98h51.40" stroke="#707070" stroke-width="1.25" stroke-dasharray="6.12 5.20"/>
<path d="M622.47 252.50h51.40" stroke="#161616" stroke-width="1.25" stroke-dasharray="6.12 5.20"/>
<path d="M622.47 261.02h51.40" stroke="#161616" stroke-width="1.25" stroke-dasharray="6.12 5.20"/>
<path d="M622.47 269.54h51.40" stroke="#707070" stroke-width="1.25" stroke-dasharray="6.12 5.20"/>
<rect x="683.74" y="240.12" width="56.60" height="8.52" fill="#fde3cf"/>
<rect x="683.74" y="257.16" width="56.60" height="8.52" fill="#fde3cf"/>
<rect x="684.24" y="232.10" width="55.60" height="41.60" fill="none" stroke="#f5821f" stroke-width="1.0"/>
<rect x="683.74" y="239.62" width="56.60" height="1.00" fill="#f5821f"/>
<rect x="683.74" y="248.14" width="56.60" height="1.00" fill="#f5821f"/>
<rect x="683.74" y="256.66" width="56.60" height="1.00" fill="#f5821f"/>
<rect x="683.74" y="265.18" width="56.60" height="1.00" fill="#f5821f"/>
<rect x="694.56" y="231.60" width="1.00" height="42.60" fill="#f5821f"/>
<rect x="705.88" y="231.60" width="1.00" height="42.60" fill="#f5821f"/>
<rect x="717.20" y="231.60" width="1.00" height="42.60" fill="#f5821f"/>
<rect x="728.52" y="231.60" width="1.00" height="42.60" fill="#f5821f"/>
<path d="M686.54 235.46h51.40" stroke="#161616" stroke-width="1.25" stroke-dasharray="6.12 5.20"/>
<path d="M686.54 243.98h51.40" stroke="#707070" stroke-width="1.25" stroke-dasharray="6.12 5.20"/>
<path d="M686.54 252.50h51.40" stroke="#161616" stroke-width="1.25" stroke-dasharray="6.12 5.20"/>
<path d="M686.54 261.02h51.40" stroke="#161616" stroke-width="1.25" stroke-dasharray="6.12 5.20"/>
<path d="M686.54 269.54h51.40" stroke="#707070" stroke-width="1.25" stroke-dasharray="6.12 5.20"/>
<rect x="747.81" y="240.12" width="56.60" height="8.52" fill="#ececec"/>
<rect x="747.81" y="257.16" width="56.60" height="8.52" fill="#ececec"/>
<rect x="748.31" y="232.10" width="55.60" height="41.60" fill="none" stroke="#a6a6a6" stroke-width="1.0"/>
<rect x="747.81" y="239.62" width="56.60" height="1.00" fill="#a6a6a6"/>
<rect x="747.81" y="248.14" width="56.60" height="1.00" fill="#a6a6a6"/>
<rect x="747.81" y="256.66" width="56.60" height="1.00" fill="#a6a6a6"/>
<rect x="747.81" y="265.18" width="56.60" height="1.00" fill="#a6a6a6"/>
<rect x="758.63" y="231.60" width="1.00" height="42.60" fill="#a6a6a6"/>
<rect x="769.95" y="231.60" width="1.00" height="42.60" fill="#a6a6a6"/>
<rect x="781.27" y="231.60" width="1.00" height="42.60" fill="#a6a6a6"/>
<rect x="792.59" y="231.60" width="1.00" height="42.60" fill="#a6a6a6"/>
<path d="M750.61 235.46h51.40" stroke="#161616" stroke-width="1.25" stroke-dasharray="6.12 5.20"/>
<path d="M750.61 243.98h51.40" stroke="#707070" stroke-width="1.25" stroke-dasharray="6.12 5.20"/>
<path d="M750.61 252.50h51.40" stroke="#161616" stroke-width="1.25" stroke-dasharray="6.12 5.20"/>
<path d="M750.61 261.02h51.40" stroke="#161616" stroke-width="1.25" stroke-dasharray="6.12 5.20"/>
<path d="M750.61 269.54h51.40" stroke="#707070" stroke-width="1.25" stroke-dasharray="6.12 5.20"/>
<rect x="811.88" y="240.12" width="56.60" height="8.52" fill="#fff1c9"/>
<rect x="811.88" y="257.16" width="56.60" height="8.52" fill="#fff1c9"/>
<rect x="812.38" y="232.10" width="55.60" height="41.60" fill="none" stroke="#ffc000" stroke-width="1.0"/>
<rect x="811.88" y="239.62" width="56.60" height="1.00" fill="#ffc000"/>
<rect x="811.88" y="248.14" width="56.60" height="1.00" fill="#ffc000"/>
<rect x="811.88" y="256.66" width="56.60" height="1.00" fill="#ffc000"/>
<rect x="811.88" y="265.18" width="56.60" height="1.00" fill="#ffc000"/>
<rect x="822.70" y="231.60" width="1.00" height="42.60" fill="#ffc000"/>
<rect x="834.02" y="231.60" width="1.00" height="42.60" fill="#ffc000"/>
<rect x="845.34" y="231.60" width="1.00" height="42.60" fill="#ffc000"/>
<rect x="856.66" y="231.60" width="1.00" height="42.60" fill="#ffc000"/>
<path d="M814.68 235.46h51.40" stroke="#161616" stroke-width="1.25" stroke-dasharray="6.12 5.20"/>
<path d="M814.68 243.98h51.40" stroke="#707070" stroke-width="1.25" stroke-dasharray="6.12 5.20"/>
<path d="M814.68 252.50h51.40" stroke="#161616" stroke-width="1.25" stroke-dasharray="6.12 5.20"/>
<path d="M814.68 261.02h51.40" stroke="#161616" stroke-width="1.25" stroke-dasharray="6.12 5.20"/>
<path d="M814.68 269.54h51.40" stroke="#707070" stroke-width="1.25" stroke-dasharray="6.12 5.20"/>
<rect x="875.95" y="240.12" width="56.60" height="8.52" fill="#dcebf7"/>
<rect x="875.95" y="257.16" width="56.60" height="8.52" fill="#dcebf7"/>
<rect x="876.45" y="232.10" width="55.60" height="41.60" fill="none" stroke="#2196d6" stroke-width="1.0"/>
<rect x="875.95" y="239.62" width="56.60" height="1.00" fill="#2196d6"/>
<rect x="875.95" y="248.14" width="56.60" height="1.00" fill="#2196d6"/>
<rect x="875.95" y="256.66" width="56.60" height="1.00" fill="#2196d6"/>
<rect x="875.95" y="265.18" width="56.60" height="1.00" fill="#2196d6"/>
<rect x="886.77" y="231.60" width="1.00" height="42.60" fill="#2196d6"/>
<rect x="898.09" y="231.60" width="1.00" height="42.60" fill="#2196d6"/>
<rect x="909.41" y="231.60" width="1.00" height="42.60" fill="#2196d6"/>
<rect x="920.73" y="231.60" width="1.00" height="42.60" fill="#2196d6"/>
<path d="M878.75 235.46h51.40" stroke="#161616" stroke-width="1.25" stroke-dasharray="6.12 5.20"/>
<path d="M878.75 243.98h51.40" stroke="#707070" stroke-width="1.25" stroke-dasharray="6.12 5.20"/>
<path d="M878.75 252.50h51.40" stroke="#161616" stroke-width="1.25" stroke-dasharray="6.12 5.20"/>
<path d="M878.75 261.02h51.40" stroke="#161616" stroke-width="1.25" stroke-dasharray="6.12 5.20"/>
<path d="M878.75 269.54h51.40" stroke="#707070" stroke-width="1.25" stroke-dasharray="6.12 5.20"/>
<rect x="940.02" y="240.12" width="56.60" height="8.52" fill="#e1efda"/>
<rect x="940.02" y="257.16" width="56.60" height="8.52" fill="#e1efda"/>
<rect x="940.52" y="232.10" width="55.60" height="41.60" fill="none" stroke="#3fa63a" stroke-width="1.0"/>
<rect x="940.02" y="239.62" width="56.60" height="1.00" fill="#3fa63a"/>
<rect x="940.02" y="248.14" width="56.60" height="1.00" fill="#3fa63a"/>
<rect x="940.02" y="256.66" width="56.60" height="1.00" fill="#3fa63a"/>
<rect x="940.02" y="265.18" width="56.60" height="1.00" fill="#3fa63a"/>
<rect x="950.84" y="231.60" width="1.00" height="42.60" fill="#3fa63a"/>
<rect x="962.16" y="231.60" width="1.00" height="42.60" fill="#3fa63a"/>
<rect x="973.48" y="231.60" width="1.00" height="42.60" fill="#3fa63a"/>
<rect x="984.80" y="231.60" width="1.00" height="42.60" fill="#3fa63a"/>
<path d="M942.82 235.46h51.40" stroke="#161616" stroke-width="1.25" stroke-dasharray="6.12 5.20"/>
<path d="M942.82 243.98h51.40" stroke="#707070" stroke-width="1.25" stroke-dasharray="6.12 5.20"/>
<path d="M942.82 252.50h51.40" stroke="#161616" stroke-width="1.25" stroke-dasharray="6.12 5.20"/>
<path d="M942.82 261.02h51.40" stroke="#161616" stroke-width="1.25" stroke-dasharray="6.12 5.20"/>
<path d="M942.82 269.54h51.40" stroke="#707070" stroke-width="1.25" stroke-dasharray="6.12 5.20"/>
<rect x="555.60" y="301.60" width="56.60" height="8.52" fill="#000000"/>
<rect x="555.60" y="310.12" width="56.60" height="8.52" fill="#d9d9d9"/>
<rect x="555.60" y="327.16" width="56.60" height="8.52" fill="#d9d9d9"/>
<rect x="556.10" y="302.10" width="55.60" height="41.60" fill="none" stroke="#000" stroke-width="1.0"/>
<rect x="555.60" y="309.67" width="56.60" height="0.90" fill="#000"/>
<rect x="555.60" y="318.19" width="56.60" height="0.90" fill="#000"/>
<rect x="555.60" y="326.71" width="56.60" height="0.90" fill="#000"/>
<rect x="555.60" y="335.23" width="56.60" height="0.90" fill="#000"/>
<path d="M558.00 305.46h52.20" stroke="#bdbdbd" stroke-width="1.5" stroke-dasharray="6.92 4.40"/>
<path d="M558.00 313.98h52.20" stroke="#161616" stroke-width="1.25" stroke-dasharray="6.92 4.40"/>
<path d="M558.00 322.50h52.20" stroke="#161616" stroke-width="1.25" stroke-dasharray="6.92 4.40"/>
<path d="M558.00 331.02h52.20" stroke="#707070" stroke-width="1.25" stroke-dasharray="6.92 4.40"/>
<path d="M558.00 339.54h52.20" stroke="#161616" stroke-width="1.25" stroke-dasharray="6.92 4.40"/>
<rect x="619.67" y="301.60" width="56.60" height="8.52" fill="#1f6fc2"/>
<rect x="619.67" y="310.12" width="56.60" height="8.52" fill="#d9e3f3"/>
<rect x="619.67" y="327.16" width="56.60" height="8.52" fill="#d9e3f3"/>
<rect x="620.17" y="302.10" width="55.60" height="41.60" fill="none" stroke="#8fb4e3" stroke-width="1.0"/>
<rect x="619.67" y="309.67" width="56.60" height="0.90" fill="#8fb4e3"/>
<rect x="619.67" y="318.19" width="56.60" height="0.90" fill="#8fb4e3"/>
<rect x="619.67" y="326.71" width="56.60" height="0.90" fill="#8fb4e3"/>
<rect x="619.67" y="335.23" width="56.60" height="0.90" fill="#8fb4e3"/>
<path d="M622.07 305.46h52.20" stroke="#e8eef8" stroke-width="1.5" stroke-dasharray="6.92 4.40"/>
<path d="M622.07 313.98h52.20" stroke="#161616" stroke-width="1.25" stroke-dasharray="6.92 4.40"/>
<path d="M622.07 322.50h52.20" stroke="#161616" stroke-width="1.25" stroke-dasharray="6.92 4.40"/>
<path d="M622.07 331.02h52.20" stroke="#707070" stroke-width="1.25" stroke-dasharray="6.92 4.40"/>
<path d="M622.07 339.54h52.20" stroke="#161616" stroke-width="1.25" stroke-dasharray="6.92 4.40"/>
<rect x="683.74" y="301.60" width="56.60" height="8.52" fill="#f5821f"/>
<rect x="683.74" y="310.12" width="56.60" height="8.52" fill="#fde3cf"/>
<rect x="683.74" y="327.16" width="56.60" height="8.52" fill="#fde3cf"/>
<rect x="684.24" y="302.10" width="55.60" height="41.60" fill="none" stroke="#f9b583" stroke-width="1.0"/>
<rect x="683.74" y="309.67" width="56.60" height="0.90" fill="#f9b583"/>
<rect x="683.74" y="318.19" width="56.60" height="0.90" fill="#f9b583"/>
<rect x="683.74" y="326.71" width="56.60" height="0.90" fill="#f9b583"/>
<rect x="683.74" y="335.23" width="56.60" height="0.90" fill="#f9b583"/>
<path d="M686.14 305.46h52.20" stroke="#e8eef8" stroke-width="1.5" stroke-dasharray="6.92 4.40"/>
<path d="M686.14 313.98h52.20" stroke="#161616" stroke-width="1.25" stroke-dasharray="6.92 4.40"/>
<path d="M686.14 322.50h52.20" stroke="#161616" stroke-width="1.25" stroke-dasharray="6.92 4.40"/>
<path d="M686.14 331.02h52.20" stroke="#707070" stroke-width="1.25" stroke-dasharray="6.92 4.40"/>
<path d="M686.14 339.54h52.20" stroke="#161616" stroke-width="1.25" stroke-dasharray="6.92 4.40"/>
<rect x="747.81" y="301.60" width="56.60" height="8.52" fill="#a6a6a6"/>
<rect x="747.81" y="310.12" width="56.60" height="8.52" fill="#ececec"/>
<rect x="747.81" y="327.16" width="56.60" height="8.52" fill="#ececec"/>
<rect x="748.31" y="302.10" width="55.60" height="41.60" fill="none" stroke="#c9c9c9" stroke-width="1.0"/>
<rect x="747.81" y="309.67" width="56.60" height="0.90" fill="#c9c9c9"/>
<rect x="747.81" y="318.19" width="56.60" height="0.90" fill="#c9c9c9"/>
<rect x="747.81" y="326.71" width="56.60" height="0.90" fill="#c9c9c9"/>
<rect x="747.81" y="335.23" width="56.60" height="0.90" fill="#c9c9c9"/>
<path d="M750.21 305.46h52.20" stroke="#e8eef8" stroke-width="1.5" stroke-dasharray="6.92 4.40"/>
<path d="M750.21 313.98h52.20" stroke="#161616" stroke-width="1.25" stroke-dasharray="6.92 4.40"/>
<path d="M750.21 322.50h52.20" stroke="#161616" stroke-width="1.25" stroke-dasharray="6.92 4.40"/>
<path d="M750.21 331.02h52.20" stroke="#707070" stroke-width="1.25" stroke-dasharray="6.92 4.40"/>
<path d="M750.21 339.54h52.20" stroke="#161616" stroke-width="1.25" stroke-dasharray="6.92 4.40"/>
<rect x="811.88" y="301.60" width="56.60" height="8.52" fill="#ffc000"/>
<rect x="811.88" y="310.12" width="56.60" height="8.52" fill="#fff1c9"/>
<rect x="811.88" y="327.16" width="56.60" height="8.52" fill="#fff1c9"/>
<rect x="812.38" y="302.10" width="55.60" height="41.60" fill="none" stroke="#ffd966" stroke-width="1.0"/>
<rect x="811.88" y="309.67" width="56.60" height="0.90" fill="#ffd966"/>
<rect x="811.88" y="318.19" width="56.60" height="0.90" fill="#ffd966"/>
<rect x="811.88" y="326.71" width="56.60" height="0.90" fill="#ffd966"/>
<rect x="811.88" y="335.23" width="56.60" height="0.90" fill="#ffd966"/>
<path d="M814.28 305.46h52.20" stroke="#e8eef8" stroke-width="1.5" stroke-dasharray="6.92 4.40"/>
<path d="M814.28 313.98h52.20" stroke="#161616" stroke-width="1.25" stroke-dasharray="6.92 4.40"/>
<path d="M814.28 322.50h52.20" stroke="#161616" stroke-width="1.25" stroke-dasharray="6.92 4.40"/>
<path d="M814.28 331.02h52.20" stroke="#707070" stroke-width="1.25" stroke-dasharray="6.92 4.40"/>
<path d="M814.28 339.54h52.20" stroke="#161616" stroke-width="1.25" stroke-dasharray="6.92 4.40"/>
<rect x="875.95" y="301.60" width="56.60" height="8.52" fill="#2196d6"/>
<rect x="875.95" y="310.12" width="56.60" height="8.52" fill="#dcebf7"/>
<rect x="875.95" y="327.16" width="56.60" height="8.52" fill="#dcebf7"/>
<rect x="876.45" y="302.10" width="55.60" height="41.60" fill="none" stroke="#8fc4e8" stroke-width="1.0"/>
<rect x="875.95" y="309.67" width="56.60" height="0.90" fill="#8fc4e8"/>
<rect x="875.95" y="318.19" width="56.60" height="0.90" fill="#8fc4e8"/>
<rect x="875.95" y="326.71" width="56.60" height="0.90" fill="#8fc4e8"/>
<rect x="875.95" y="335.23" width="56.60" height="0.90" fill="#8fc4e8"/>
<path d="M878.35 305.46h52.20" stroke="#e8eef8" stroke-width="1.5" stroke-dasharray="6.92 4.40"/>
<path d="M878.35 313.98h52.20" stroke="#161616" stroke-width="1.25" stroke-dasharray="6.92 4.40"/>
<path d="M878.35 322.50h52.20" stroke="#161616" stroke-width="1.25" stroke-dasharray="6.92 4.40"/>
<path d="M878.35 331.02h52.20" stroke="#707070" stroke-width="1.25" stroke-dasharray="6.92 4.40"/>
<path d="M878.35 339.54h52.20" stroke="#161616" stroke-width="1.25" stroke-dasharray="6.92 4.40"/>
<rect x="940.02" y="301.60" width="56.60" height="8.52" fill="#3fa63a"/>
<rect x="940.02" y="310.12" width="56.60" height="8.52" fill="#e1efda"/>
<rect x="940.02" y="327.16" width="56.60" height="8.52" fill="#e1efda"/>
<rect x="940.52" y="302.10" width="55.60" height="41.60" fill="none" stroke="#a3d197" stroke-width="1.0"/>
<rect x="940.02" y="309.67" width="56.60" height="0.90" fill="#a3d197"/>
<rect x="940.02" y="318.19" width="56.60" height="0.90" fill="#a3d197"/>
<rect x="940.02" y="326.71" width="56.60" height="0.90" fill="#a3d197"/>
<rect x="940.02" y="335.23" width="56.60" height="0.90" fill="#a3d197"/>
<path d="M942.42 305.46h52.20" stroke="#e8eef8" stroke-width="1.5" stroke-dasharray="6.92 4.40"/>
<path d="M942.42 313.98h52.20" stroke="#161616" stroke-width="1.25" stroke-dasharray="6.92 4.40"/>
<path d="M942.42 322.50h52.20" stroke="#161616" stroke-width="1.25" stroke-dasharray="6.92 4.40"/>
<path d="M942.42 331.02h52.20" stroke="#707070" stroke-width="1.25" stroke-dasharray="6.92 4.40"/>
<path d="M942.42 339.54h52.20" stroke="#161616" stroke-width="1.25" stroke-dasharray="6.92 4.40"/>
<rect x="555.60" y="351.80" width="56.60" height="8.52" fill="#000000"/>
<rect x="555.60" y="360.32" width="56.60" height="34.08" fill="#e4e4e4"/>
<rect x="555.60" y="360.32" width="56.60" height="8.52" fill="#a6a6a6"/>
<rect x="555.60" y="377.36" width="56.60" height="8.52" fill="#a6a6a6"/>
<rect x="555.60" y="359.87" width="56.60" height="0.90" fill="#fff"/>
<rect x="555.60" y="368.39" width="56.60" height="0.90" fill="#fff"/>
<rect x="555.60" y="376.91" width="56.60" height="0.90" fill="#fff"/>
<rect x="555.60" y="385.43" width="56.60" height="0.90" fill="#fff"/>
<rect x="566.37" y="351.80" width="1.10" height="42.60" fill="#fff"/>
<rect x="577.69" y="351.80" width="1.10" height="42.60" fill="#fff"/>
<rect x="589.01" y="351.80" width="1.10" height="42.60" fill="#fff"/>
<rect x="600.33" y="351.80" width="1.10" height="42.60" fill="#fff"/>
<path d="M558.40 355.66h51.40" stroke="#9a9a9a" stroke-width="1.5" stroke-dasharray="6.12 5.20"/>
<path d="M558.40 364.18h51.40" stroke="#161616" stroke-width="1.25" stroke-dasharray="6.12 5.20"/>
<path d="M558.40 372.70h51.40" stroke="#707070" stroke-width="1.25" stroke-dasharray="6.12 5.20"/>
<path d="M558.40 381.22h51.40" stroke="#707070" stroke-width="1.25" stroke-dasharray="6.12 5.20"/>
<path d="M558.40 389.74h51.40" stroke="#161616" stroke-width="1.25" stroke-dasharray="6.12 5.20"/>
<rect x="619.67" y="351.80" width="56.60" height="8.52" fill="#1f6fc2"/>
<rect x="619.67" y="360.32" width="56.60" height="34.08" fill="#d9e3f3"/>
<rect x="619.67" y="360.32" width="56.60" height="8.52" fill="#b3c9ea"/>
<rect x="619.67" y="377.36" width="56.60" height="8.52" fill="#b3c9ea"/>
<rect x="619.67" y="359.87" width="56.60" height="0.90" fill="#fff"/>
<rect x="619.67" y="368.39" width="56.60" height="0.90" fill="#fff"/>
<rect x="619.67" y="376.91" width="56.60" height="0.90" fill="#fff"/>
<rect x="619.67" y="385.43" width="56.60" height="0.90" fill="#fff"/>
<rect x="630.44" y="351.80" width="1.10" height="42.60" fill="#fff"/>
<rect x="641.76" y="351.80" width="1.10" height="42.60" fill="#fff"/>
<rect x="653.08" y="351.80" width="1.10" height="42.60" fill="#fff"/>
<rect x="664.40" y="351.80" width="1.10" height="42.60" fill="#fff"/>
<path d="M622.47 355.66h51.40" stroke="#e8eef8" stroke-width="1.5" stroke-dasharray="6.12 5.20"/>
<path d="M622.47 364.18h51.40" stroke="#161616" stroke-width="1.25" stroke-dasharray="6.12 5.20"/>
<path d="M622.47 372.70h51.40" stroke="#707070" stroke-width="1.25" stroke-dasharray="6.12 5.20"/>
<path d="M622.47 381.22h51.40" stroke="#707070" stroke-width="1.25" stroke-dasharray="6.12 5.20"/>
<path d="M622.47 389.74h51.40" stroke="#161616" stroke-width="1.25" stroke-dasharray="6.12 5.20"/>
<rect x="683.74" y="351.80" width="56.60" height="8.52" fill="#f5821f"/>
<rect x="683.74" y="360.32" width="56.60" height="34.08" fill="#fde3cf"/>
<rect x="683.74" y="360.32" width="56.60" height="8.52" fill="#fbc9a4"/>
<rect x="683.74" y="377.36" width="56.60" height="8.52" fill="#fbc9a4"/>
<rect x="683.74" y="359.87" width="56.60" height="0.90" fill="#fff"/>
<rect x="683.74" y="368.39" width="56.60" height="0.90" fill="#fff"/>
<rect x="683.74" y="376.91" width="56.60" height="0.90" fill="#fff"/>
<rect x="683.74" y="385.43" width="56.60" height="0.90" fill="#fff"/>
<rect x="694.51" y="351.80" width="1.10" height="42.60" fill="#fff"/>
<rect x="705.83" y="351.80" width="1.10" height="42.60" fill="#fff"/>
<rect x="717.15" y="351.80" width="1.10" height="42.60" fill="#fff"/>
<rect x="728.47" y="351.80" width="1.10" height="42.60" fill="#fff"/>
<path d="M686.54 355.66h51.40" stroke="#e8eef8" stroke-width="1.5" stroke-dasharray="6.12 5.20"/>
<path d="M686.54 364.18h51.40" stroke="#161616" stroke-width="1.25" stroke-dasharray="6.12 5.20"/>
<path d="M686.54 372.70h51.40" stroke="#707070" stroke-width="1.25" stroke-dasharray="6.12 5.20"/>
<path d="M686.54 381.22h51.40" stroke="#707070" stroke-width="1.25" stroke-dasharray="6.12 5.20"/>
<path d="M686.54 389.74h51.40" stroke="#161616" stroke-width="1.25" stroke-dasharray="6.12 5.20"/>
<rect x="747.81" y="351.80" width="56.60" height="8.52" fill="#a6a6a6"/>
<rect x="747.81" y="360.32" width="56.60" height="34.08" fill="#ececec"/>
<rect x="747.81" y="360.32" width="56.60" height="8.52" fill="#d4d4d4"/>
<rect x="747.81" y="377.36" width="56.60" height="8.52" fill="#d4d4d4"/>
<rect x="747.81" y="359.87" width="56.60" height="0.90" fill="#fff"/>
<rect x="747.81" y="368.39" width="56.60" height="0.90" fill="#fff"/>
<rect x="747.81" y="376.91" width="56.60" height="0.90" fill="#fff"/>
<rect x="747.81" y="385.43" width="56.60" height="0.90" fill="#fff"/>
<rect x="758.58" y="351.80" width="1.10" height="42.60" fill="#fff"/>
<rect x="769.90" y="351.80" width="1.10" height="42.60" fill="#fff"/>
<rect x="781.22" y="351.80" width="1.10" height="42.60" fill="#fff"/>
<rect x="792.54" y="351.80" width="1.10" height="42.60" fill="#fff"/>
<path d="M750.61 355.66h51.40" stroke="#e8eef8" stroke-width="1.5" stroke-dasharray="6.12 5.20"/>
<path d="M750.61 364.18h51.40" stroke="#161616" stroke-width="1.25" stroke-dasharray="6.12 5.20"/>
<path d="M750.61 372.70h51.40" stroke="#707070" stroke-width="1.25" stroke-dasharray="6.12 5.20"/>
<path d="M750.61 381.22h51.40" stroke="#707070" stroke-width="1.25" stroke-dasharray="6.12 5.20"/>
<path d="M750.61 389.74h51.40" stroke="#161616" stroke-width="1.25" stroke-dasharray="6.12 5.20"/>
<rect x="811.88" y="351.80" width="56.60" height="8.52" fill="#ffc000"/>
<rect x="811.88" y="360.32" width="56.60" height="34.08" fill="#fff1c9"/>
<rect x="811.88" y="360.32" width="56.60" height="8.52" fill="#ffe18f"/>
<rect x="811.88" y="377.36" width="56.60" height="8.52" fill="#ffe18f"/>
<rect x="811.88" y="359.87" width="56.60" height="0.90" fill="#fff"/>
<rect x="811.88" y="368.39" width="56.60" height="0.90" fill="#fff"/>
<rect x="811.88" y="376.91" width="56.60" height="0.90" fill="#fff"/>
<rect x="811.88" y="385.43" width="56.60" height="0.90" fill="#fff"/>
<rect x="822.65" y="351.80" width="1.10" height="42.60" fill="#fff"/>
<rect x="833.97" y="351.80" width="1.10" height="42.60" fill="#fff"/>
<rect x="845.29" y="351.80" width="1.10" height="42.60" fill="#fff"/>
<rect x="856.61" y="351.80" width="1.10" height="42.60" fill="#fff"/>
<path d="M814.68 355.66h51.40" stroke="#e8eef8" stroke-width="1.5" stroke-dasharray="6.12 5.20"/>
<path d="M814.68 364.18h51.40" stroke="#161616" stroke-width="1.25" stroke-dasharray="6.12 5.20"/>
<path d="M814.68 372.70h51.40" stroke="#707070" stroke-width="1.25" stroke-dasharray="6.12 5.20"/>
<path d="M814.68 381.22h51.40" stroke="#707070" stroke-width="1.25" stroke-dasharray="6.12 5.20"/>
<path d="M814.68 389.74h51.40" stroke="#161616" stroke-width="1.25" stroke-dasharray="6.12 5.20"/>
<rect x="875.95" y="351.80" width="56.60" height="8.52" fill="#2196d6"/>
<rect x="875.95" y="360.32" width="56.60" height="34.08" fill="#dcebf7"/>
<rect x="875.95" y="360.32" width="56.60" height="8.52" fill="#b7d7ef"/>
<rect x="875.95" y="377.36" width="56.60" height="8.52" fill="#b7d7ef"/>
<rect x="875.95" y="359.87" width="56.60" height="0.90" fill="#fff"/>
<rect x="875.95" y="368.39" width="56.60" height="0.90" fill="#fff"/>
<rect x="875.95" y="376.91" width="56.60" height="0.90" fill="#fff"/>
<rect x="875.95" y="385.43" width="56.60" height="0.90" fill="#fff"/>
<rect x="886.72" y="351.80" width="1.10" height="42.60" fill="#fff"/>
<rect x="898.04" y="351.80" width="1.10" height="42.60" fill="#fff"/>
<rect x="909.36" y="351.80" width="1.10" height="42.60" fill="#fff"/>
<rect x="920.68" y="351.80" width="1.10" height="42.60" fill="#fff"/>
<path d="M878.75 355.66h51.40" stroke="#e8eef8" stroke-width="1.5" stroke-dasharray="6.12 5.20"/>
<path d="M878.75 364.18h51.40" stroke="#161616" stroke-width="1.25" stroke-dasharray="6.12 5.20"/>
<path d="M878.75 372.70h51.40" stroke="#707070" stroke-width="1.25" stroke-dasharray="6.12 5.20"/>
<path d="M878.75 381.22h51.40" stroke="#707070" stroke-width="1.25" stroke-dasharray="6.12 5.20"/>
<path d="M878.75 389.74h51.40" stroke="#161616" stroke-width="1.25" stroke-dasharray="6.12 5.20"/>
<rect x="940.02" y="351.80" width="56.60" height="8.52" fill="#3fa63a"/>
<rect x="940.02" y="360.32" width="56.60" height="34.08" fill="#e1efda"/>
<rect x="940.02" y="360.32" width="56.60" height="8.52" fill="#c0dfb4"/>
<rect x="940.02" y="377.36" width="56.60" height="8.52" fill="#c0dfb4"/>
<rect x="940.02" y="359.87" width="56.60" height="0.90" fill="#fff"/>
<rect x="940.02" y="368.39" width="56.60" height="0.90" fill="#fff"/>
<rect x="940.02" y="376.91" width="56.60" height="0.90" fill="#fff"/>
<rect x="940.02" y="385.43" width="56.60" height="0.90" fill="#fff"/>
<rect x="950.79" y="351.80" width="1.10" height="42.60" fill="#fff"/>
<rect x="962.11" y="351.80" width="1.10" height="42.60" fill="#fff"/>
<rect x="973.43" y="351.80" width="1.10" height="42.60" fill="#fff"/>
<rect x="984.75" y="351.80" width="1.10" height="42.60" fill="#fff"/>
<path d="M942.82 355.66h51.40" stroke="#e8eef8" stroke-width="1.5" stroke-dasharray="6.12 5.20"/>
<path d="M942.82 364.18h51.40" stroke="#161616" stroke-width="1.25" stroke-dasharray="6.12 5.20"/>
<path d="M942.82 372.70h51.40" stroke="#707070" stroke-width="1.25" stroke-dasharray="6.12 5.20"/>
<path d="M942.82 381.22h51.40" stroke="#707070" stroke-width="1.25" stroke-dasharray="6.12 5.20"/>
<path d="M942.82 389.74h51.40" stroke="#161616" stroke-width="1.25" stroke-dasharray="6.12 5.20"/>
<rect x="555.60" y="402.00" width="56.60" height="8.52" fill="#000"/>
<rect x="556.10" y="402.50" width="55.60" height="41.60" fill="none" stroke="#000" stroke-width="1.0"/>
<rect x="555.60" y="410.02" width="56.60" height="1.00" fill="#000"/>
<rect x="555.60" y="418.54" width="56.60" height="1.00" fill="#000"/>
<rect x="555.60" y="427.06" width="56.60" height="1.00" fill="#000"/>
<rect x="555.60" y="435.58" width="56.60" height="1.00" fill="#000"/>
<rect x="566.42" y="410.52" width="1.00" height="34.08" fill="#000"/>
<rect x="577.74" y="410.52" width="1.00" height="34.08" fill="#000"/>
<rect x="589.06" y="410.52" width="1.00" height="34.08" fill="#000"/>
<rect x="600.38" y="410.52" width="1.00" height="34.08" fill="#000"/>
<rect x="556.10" y="411.02" width="55.60" height="7.52" fill="#e0e0e0"/>
<rect x="556.10" y="428.06" width="55.60" height="7.52" fill="#e0e0e0"/>
<rect x="566.42" y="410.52" width="1.00" height="34.08" fill="#000"/>
<rect x="577.74" y="410.52" width="1.00" height="34.08" fill="#000"/>
<rect x="589.06" y="410.52" width="1.00" height="34.08" fill="#000"/>
<rect x="600.38" y="410.52" width="1.00" height="34.08" fill="#000"/>
<path d="M558.40 405.86h51.40" stroke="#bdbdbd" stroke-width="1.5" stroke-dasharray="6.12 5.20"/>
<path d="M558.40 414.38h51.40" stroke="#161616" stroke-width="1.25" stroke-dasharray="6.12 5.20"/>
<path d="M558.40 422.90h51.40" stroke="#707070" stroke-width="1.25" stroke-dasharray="6.12 5.20"/>
<path d="M558.40 431.42h51.40" stroke="#161616" stroke-width="1.25" stroke-dasharray="6.12 5.20"/>
<path d="M558.40 439.94h51.40" stroke="#161616" stroke-width="1.25" stroke-dasharray="6.12 5.20"/>
<rect x="619.67" y="402.00" width="56.60" height="8.52" fill="#1f6fc2"/>
<rect x="619.67" y="410.52" width="56.60" height="8.52" fill="#dcdcdc"/>
<rect x="619.67" y="427.56" width="56.60" height="8.52" fill="#dcdcdc"/>
<rect x="619.67" y="401.90" width="56.60" height="1.00" fill="#222"/>
<rect x="619.67" y="409.92" width="56.60" height="1.20" fill="#222"/>
<rect x="619.67" y="443.50" width="56.60" height="1.20" fill="#222"/>
<path d="M622.07 405.86h52.20" stroke="#f0f0f0" stroke-width="1.5" stroke-dasharray="6.92 4.40"/>
<path d="M622.07 414.38h52.20" stroke="#161616" stroke-width="1.25" stroke-dasharray="6.92 4.40"/>
<path d="M622.07 422.90h52.20" stroke="#707070" stroke-width="1.25" stroke-dasharray="6.92 4.40"/>
<path d="M622.07 431.42h52.20" stroke="#707070" stroke-width="1.25" stroke-dasharray="6.92 4.40"/>
<path d="M622.07 439.94h52.20" stroke="#161616" stroke-width="1.25" stroke-dasharray="6.92 4.40"/>
<rect x="683.74" y="402.00" width="56.60" height="8.52" fill="#f5821f"/>
<rect x="683.74" y="410.52" width="56.60" height="8.52" fill="#dcdcdc"/>
<rect x="683.74" y="427.56" width="56.60" height="8.52" fill="#dcdcdc"/>
<rect x="683.74" y="401.90" width="56.60" height="1.00" fill="#222"/>
<rect x="683.74" y="409.92" width="56.60" height="1.20" fill="#222"/>
<rect x="683.74" y="443.50" width="56.60" height="1.20" fill="#222"/>
<path d="M686.14 405.86h52.20" stroke="#f0f0f0" stroke-width="1.5" stroke-dasharray="6.92 4.40"/>
<path d="M686.14 414.38h52.20" stroke="#161616" stroke-width="1.25" stroke-dasharray="6.92 4.40"/>
<path d="M686.14 422.90h52.20" stroke="#707070" stroke-width="1.25" stroke-dasharray="6.92 4.40"/>
<path d="M686.14 431.42h52.20" stroke="#707070" stroke-width="1.25" stroke-dasharray="6.92 4.40"/>
<path d="M686.14 439.94h52.20" stroke="#161616" stroke-width="1.25" stroke-dasharray="6.92 4.40"/>
<rect x="747.81" y="402.00" width="56.60" height="8.52" fill="#a6a6a6"/>
<rect x="747.81" y="410.52" width="56.60" height="8.52" fill="#dcdcdc"/>
<rect x="747.81" y="427.56" width="56.60" height="8.52" fill="#dcdcdc"/>
<rect x="747.81" y="401.90" width="56.60" height="1.00" fill="#222"/>
<rect x="747.81" y="409.92" width="56.60" height="1.20" fill="#222"/>
<rect x="747.81" y="443.50" width="56.60" height="1.20" fill="#222"/>
<path d="M750.21 405.86h52.20" stroke="#f0f0f0" stroke-width="1.5" stroke-dasharray="6.92 4.40"/>
<path d="M750.21 414.38h52.20" stroke="#161616" stroke-width="1.25" stroke-dasharray="6.92 4.40"/>
<path d="M750.21 422.90h52.20" stroke="#707070" stroke-width="1.25" stroke-dasharray="6.92 4.40"/>
<path d="M750.21 431.42h52.20" stroke="#707070" stroke-width="1.25" stroke-dasharray="6.92 4.40"/>
<path d="M750.21 439.94h52.20" stroke="#161616" stroke-width="1.25" stroke-dasharray="6.92 4.40"/>
<rect x="811.88" y="402.00" width="56.60" height="8.52" fill="#ffc000"/>
<rect x="811.88" y="410.52" width="56.60" height="8.52" fill="#dcdcdc"/>
<rect x="811.88" y="427.56" width="56.60" height="8.52" fill="#dcdcdc"/>
<rect x="811.88" y="401.90" width="56.60" height="1.00" fill="#222"/>
<rect x="811.88" y="409.92" width="56.60" height="1.20" fill="#222"/>
<rect x="811.88" y="443.50" width="56.60" height="1.20" fill="#222"/>
<path d="M814.28 405.86h52.20" stroke="#f0f0f0" stroke-width="1.5" stroke-dasharray="6.92 4.40"/>
<path d="M814.28 414.38h52.20" stroke="#161616" stroke-width="1.25" stroke-dasharray="6.92 4.40"/>
<path d="M814.28 422.90h52.20" stroke="#707070" stroke-width="1.25" stroke-dasharray="6.92 4.40"/>
<path d="M814.28 431.42h52.20" stroke="#707070" stroke-width="1.25" stroke-dasharray="6.92 4.40"/>
<path d="M814.28 439.94h52.20" stroke="#161616" stroke-width="1.25" stroke-dasharray="6.92 4.40"/>
<rect x="875.95" y="402.00" width="56.60" height="8.52" fill="#2196d6"/>
<rect x="875.95" y="410.52" width="56.60" height="8.52" fill="#dcdcdc"/>
<rect x="875.95" y="427.56" width="56.60" height="8.52" fill="#dcdcdc"/>
<rect x="875.95" y="401.90" width="56.60" height="1.00" fill="#222"/>
<rect x="875.95" y="409.92" width="56.60" height="1.20" fill="#222"/>
<rect x="875.95" y="443.50" width="56.60" height="1.20" fill="#222"/>
<path d="M878.35 405.86h52.20" stroke="#f0f0f0" stroke-width="1.5" stroke-dasharray="6.92 4.40"/>
<path d="M878.35 414.38h52.20" stroke="#161616" stroke-width="1.25" stroke-dasharray="6.92 4.40"/>
<path d="M878.35 422.90h52.20" stroke="#707070" stroke-width="1.25" stroke-dasharray="6.92 4.40"/>
<path d="M878.35 431.42h52.20" stroke="#707070" stroke-width="1.25" stroke-dasharray="6.92 4.40"/>
<path d="M878.35 439.94h52.20" stroke="#161616" stroke-width="1.25" stroke-dasharray="6.92 4.40"/>
<rect x="940.02" y="402.00" width="56.60" height="8.52" fill="#3fa63a"/>
<rect x="940.02" y="410.52" width="56.60" height="8.52" fill="#dcdcdc"/>
<rect x="940.02" y="427.56" width="56.60" height="8.52" fill="#dcdcdc"/>
<rect x="940.02" y="401.90" width="56.60" height="1.00" fill="#222"/>
<rect x="940.02" y="409.92" width="56.60" height="1.20" fill="#222"/>
<rect x="940.02" y="443.50" width="56.60" height="1.20" fill="#222"/>
<path d="M942.42 405.86h52.20" stroke="#f0f0f0" stroke-width="1.5" stroke-dasharray="6.92 4.40"/>
<path d="M942.42 414.38h52.20" stroke="#161616" stroke-width="1.25" stroke-dasharray="6.92 4.40"/>
<path d="M942.42 422.90h52.20" stroke="#707070" stroke-width="1.25" stroke-dasharray="6.92 4.40"/>
<path d="M942.42 431.42h52.20" stroke="#707070" stroke-width="1.25" stroke-dasharray="6.92 4.40"/>
<path d="M942.42 439.94h52.20" stroke="#161616" stroke-width="1.25" stroke-dasharray="6.92 4.40"/>
<rect x="555.60" y="452.20" width="56.60" height="42.60" fill="#dcdcdc"/>
<rect x="555.60" y="460.72" width="56.60" height="8.52" fill="#a6a6a6"/>
<rect x="555.60" y="477.76" width="56.60" height="8.52" fill="#a6a6a6"/>
<rect x="556.10" y="452.70" width="55.60" height="41.60" fill="none" stroke="#000" stroke-width="1.0"/>
<rect x="555.60" y="460.27" width="56.60" height="0.90" fill="#000"/>
<rect x="555.60" y="468.79" width="56.60" height="0.90" fill="#000"/>
<rect x="555.60" y="477.31" width="56.60" height="0.90" fill="#000"/>
<rect x="555.60" y="485.83" width="56.60" height="0.90" fill="#000"/>
<rect x="566.47" y="452.20" width="0.90" height="42.60" fill="#000"/>
<rect x="577.79" y="452.20" width="0.90" height="42.60" fill="#000"/>
<rect x="589.11" y="452.20" width="0.90" height="42.60" fill="#000"/>
<rect x="600.43" y="452.20" width="0.90" height="42.60" fill="#000"/>
<path d="M558.40 456.06h51.40" stroke="#333" stroke-width="1.25" stroke-dasharray="6.12 5.20"/>
<path d="M558.40 464.58h51.40" stroke="#161616" stroke-width="1.25" stroke-dasharray="6.12 5.20"/>
<path d="M558.40 473.10h51.40" stroke="#707070" stroke-width="1.25" stroke-dasharray="6.12 5.20"/>
<path d="M558.40 481.62h51.40" stroke="#161616" stroke-width="1.25" stroke-dasharray="6.12 5.20"/>
<path d="M558.40 490.14h51.40" stroke="#707070" stroke-width="1.25" stroke-dasharray="6.12 5.20"/>
<rect x="619.67" y="452.20" width="56.60" height="42.60" fill="#d9e3f3"/>
<rect x="619.67" y="460.72" width="56.60" height="8.52" fill="#b3c9ea"/>
<rect x="619.67" y="477.76" width="56.60" height="8.52" fill="#b3c9ea"/>
<rect x="620.17" y="452.70" width="55.60" height="41.60" fill="none" stroke="#8fb4e3" stroke-width="1.0"/>
<rect x="619.67" y="460.27" width="56.60" height="0.90" fill="#8fb4e3"/>
<rect x="619.67" y="468.79" width="56.60" height="0.90" fill="#8fb4e3"/>
<rect x="619.67" y="477.31" width="56.60" height="0.90" fill="#8fb4e3"/>
<rect x="619.67" y="485.83" width="56.60" height="0.90" fill="#8fb4e3"/>
<rect x="630.54" y="452.20" width="0.90" height="42.60" fill="#8fb4e3"/>
<rect x="641.86" y="452.20" width="0.90" height="42.60" fill="#8fb4e3"/>
<rect x="653.18" y="452.20" width="0.90" height="42.60" fill="#8fb4e3"/>
<rect x="664.50" y="452.20" width="0.90" height="42.60" fill="#8fb4e3"/>
<path d="M622.47 456.06h51.40" stroke="#161616" stroke-width="1.25" stroke-dasharray="6.12 5.20"/>
<path d="M622.47 464.58h51.40" stroke="#161616" stroke-width="1.25" stroke-dasharray="6.12 5.20"/>
<path d="M622.47 473.10h51.40" stroke="#707070" stroke-width="1.25" stroke-dasharray="6.12 5.20"/>
<path d="M622.47 481.62h51.40" stroke="#161616" stroke-width="1.25" stroke-dasharray="6.12 5.20"/>
<path d="M622.47 490.14h51.40" stroke="#707070" stroke-width="1.25" stroke-dasharray="6.12 5.20"/>
<rect x="683.74" y="452.20" width="56.60" height="42.60" fill="#fde3cf"/>
<rect x="683.74" y="460.72" width="56.60" height="8.52" fill="#fbc9a4"/>
<rect x="683.74" y="477.76" width="56.60" height="8.52" fill="#fbc9a4"/>
<rect x="684.24" y="452.70" width="55.60" height="41.60" fill="none" stroke="#f9b583" stroke-width="1.0"/>
<rect x="683.74" y="460.27" width="56.60" height="0.90" fill="#f9b583"/>
<rect x="683.74" y="468.79" width="56.60" height="0.90" fill="#f9b583"/>
<rect x="683.74" y="477.31" width="56.60" height="0.90" fill="#f9b583"/>
<rect x="683.74" y="485.83" width="56.60" height="0.90" fill="#f9b583"/>
<rect x="694.61" y="452.20" width="0.90" height="42.60" fill="#f9b583"/>
<rect x="705.93" y="452.20" width="0.90" height="42.60" fill="#f9b583"/>
<rect x="717.25" y="452.20" width="0.90" height="42.60" fill="#f9b583"/>
<rect x="728.57" y="452.20" width="0.90" height="42.60" fill="#f9b583"/>
<path d="M686.54 456.06h51.40" stroke="#161616" stroke-width="1.25" stroke-dasharray="6.12 5.20"/>
<path d="M686.54 464.58h51.40" stroke="#161616" stroke-width="1.25" stroke-dasharray="6.12 5.20"/>
<path d="M686.54 473.10h51.40" stroke="#707070" stroke-width="1.25" stroke-dasharray="6.12 5.20"/>
<path d="M686.54 481.62h51.40" stroke="#161616" stroke-width="1.25" stroke-dasharray="6.12 5.20"/>
<path d="M686.54 490.14h51.40" stroke="#707070" stroke-width="1.25" stroke-dasharray="6.12 5.20"/>
<rect x="747.81" y="452.20" width="56.60" height="42.60" fill="#ececec"/>
<rect x="747.81" y="460.72" width="56.60" height="8.52" fill="#d4d4d4"/>
<rect x="747.81" y="477.76" width="56.60" height="8.52" fill="#d4d4d4"/>
<rect x="748.31" y="452.70" width="55.60" height="41.60" fill="none" stroke="#c9c9c9" stroke-width="1.0"/>
<rect x="747.81" y="460.27" width="56.60" height="0.90" fill="#c9c9c9"/>
<rect x="747.81" y="468.79" width="56.60" height="0.90" fill="#c9c9c9"/>
<rect x="747.81" y="477.31" width="56.60" height="0.90" fill="#c9c9c9"/>
<rect x="747.81" y="485.83" width="56.60" height="0.90" fill="#c9c9c9"/>
<rect x="758.68" y="452.20" width="0.90" height="42.60" fill="#c9c9c9"/>
<rect x="770.00" y="452.20" width="0.90" height="42.60" fill="#c9c9c9"/>
<rect x="781.32" y="452.20" width="0.90" height="42.60" fill="#c9c9c9"/>
<rect x="792.64" y="452.20" width="0.90" height="42.60" fill="#c9c9c9"/>
<path d="M750.61 456.06h51.40" stroke="#161616" stroke-width="1.25" stroke-dasharray="6.12 5.20"/>
<path d="M750.61 464.58h51.40" stroke="#161616" stroke-width="1.25" stroke-dasharray="6.12 5.20"/>
<path d="M750.61 473.10h51.40" stroke="#707070" stroke-width="1.25" stroke-dasharray="6.12 5.20"/>
<path d="M750.61 481.62h51.40" stroke="#161616" stroke-width="1.25" stroke-dasharray="6.12 5.20"/>
<path d="M750.61 490.14h51.40" stroke="#707070" stroke-width="1.25" stroke-dasharray="6.12 5.20"/>
<rect x="811.88" y="452.20" width="56.60" height="42.60" fill="#fff1c9"/>
<rect x="811.88" y="460.72" width="56.60" height="8.52" fill="#ffe18f"/>
<rect x="811.88" y="477.76" width="56.60" height="8.52" fill="#ffe18f"/>
<rect x="812.38" y="452.70" width="55.60" height="41.60" fill="none" stroke="#ffd966" stroke-width="1.0"/>
<rect x="811.88" y="460.27" width="56.60" height="0.90" fill="#ffd966"/>
<rect x="811.88" y="468.79" width="56.60" height="0.90" fill="#ffd966"/>
<rect x="811.88" y="477.31" width="56.60" height="0.90" fill="#ffd966"/>
<rect x="811.88" y="485.83" width="56.60" height="0.90" fill="#ffd966"/>
<rect x="822.75" y="452.20" width="0.90" height="42.60" fill="#ffd966"/>
<rect x="834.07" y="452.20" width="0.90" height="42.60" fill="#ffd966"/>
<rect x="845.39" y="452.20" width="0.90" height="42.60" fill="#ffd966"/>
<rect x="856.71" y="452.20" width="0.90" height="42.60" fill="#ffd966"/>
<path d="M814.68 456.06h51.40" stroke="#161616" stroke-width="1.25" stroke-dasharray="6.12 5.20"/>
<path d="M814.68 464.58h51.40" stroke="#161616" stroke-width="1.25" stroke-dasharray="6.12 5.20"/>
<path d="M814.68 473.10h51.40" stroke="#707070" stroke-width="1.25" stroke-dasharray="6.12 5.20"/>
<path d="M814.68 481.62h51.40" stroke="#161616" stroke-width="1.25" stroke-dasharray="6.12 5.20"/>
<path d="M814.68 490.14h51.40" stroke="#707070" stroke-width="1.25" stroke-dasharray="6.12 5.20"/>
<rect x="875.95" y="452.20" width="56.60" height="42.60" fill="#dcebf7"/>
<rect x="875.95" y="460.72" width="56.60" height="8.52" fill="#b7d7ef"/>
<rect x="875.95" y="477.76" width="56.60" height="8.52" fill="#b7d7ef"/>
<rect x="876.45" y="452.70" width="55.60" height="41.60" fill="none" stroke="#8fc4e8" stroke-width="1.0"/>
<rect x="875.95" y="460.27" width="56.60" height="0.90" fill="#8fc4e8"/>
<rect x="875.95" y="468.79" width="56.60" height="0.90" fill="#8fc4e8"/>
<rect x="875.95" y="477.31" width="56.60" height="0.90" fill="#8fc4e8"/>
<rect x="875.95" y="485.83" width="56.60" height="0.90" fill="#8fc4e8"/>
<rect x="886.82" y="452.20" width="0.90" height="42.60" fill="#8fc4e8"/>
<rect x="898.14" y="452.20" width="0.90" height="42.60" fill="#8fc4e8"/>
<rect x="909.46" y="452.20" width="0.90" height="42.60" fill="#8fc4e8"/>
<rect x="920.78" y="452.20" width="0.90" height="42.60" fill="#8fc4e8"/>
<path d="M878.75 456.06h51.40" stroke="#161616" stroke-width="1.25" stroke-dasharray="6.12 5.20"/>
<path d="M878.75 464.58h51.40" stroke="#161616" stroke-width="1.25" stroke-dasharray="6.12 5.20"/>
<path d="M878.75 473.10h51.40" stroke="#707070" stroke-width="1.25" stroke-dasharray="6.12 5.20"/>
<path d="M878.75 481.62h51.40" stroke="#161616" stroke-width="1.25" stroke-dasharray="6.12 5.20"/>
<path d="M878.75 490.14h51.40" stroke="#707070" stroke-width="1.25" stroke-dasharray="6.12 5.20"/>
<rect x="940.02" y="452.20" width="56.60" height="42.60" fill="#e1efda"/>
<rect x="940.02" y="460.72" width="56.60" height="8.52" fill="#c0dfb4"/>
<rect x="940.02" y="477.76" width="56.60" height="8.52" fill="#c0dfb4"/>
<rect x="940.52" y="452.70" width="55.60" height="41.60" fill="none" stroke="#a3d197" stroke-width="1.0"/>
<rect x="940.02" y="460.27" width="56.60" height="0.90" fill="#a3d197"/>
<rect x="940.02" y="468.79" width="56.60" height="0.90" fill="#a3d197"/>
<rect x="940.02" y="477.31" width="56.60" height="0.90" fill="#a3d197"/>
<rect x="940.02" y="485.83" width="56.60" height="0.90" fill="#a3d197"/>
<rect x="950.89" y="452.20" width="0.90" height="42.60" fill="#a3d197"/>
<rect x="962.21" y="452.20" width="0.90" height="42.60" fill="#a3d197"/>
<rect x="973.53" y="452.20" width="0.90" height="42.60" fill="#a3d197"/>
<rect x="984.85" y="452.20" width="0.90" height="42.60" fill="#a3d197"/>
<path d="M942.82 456.06h51.40" stroke="#161616" stroke-width="1.25" stroke-dasharray="6.12 5.20"/>
<path d="M942.82 464.58h51.40" stroke="#161616" stroke-width="1.25" stroke-dasharray="6.12 5.20"/>
<path d="M942.82 473.10h51.40" stroke="#707070" stroke-width="1.25" stroke-dasharray="6.12 5.20"/>
<path d="M942.82 481.62h51.40" stroke="#161616" stroke-width="1.25" stroke-dasharray="6.12 5.20"/>
<path d="M942.82 490.14h51.40" stroke="#707070" stroke-width="1.25" stroke-dasharray="6.12 5.20"/>
<rect x="555.60" y="522.80" width="56.60" height="8.52" fill="#000"/>
<rect x="555.60" y="531.92" width="56.60" height="33.48" fill="#737373"/>
<rect x="555.60" y="531.92" width="56.60" height="7.92" fill="#404040"/>
<rect x="555.60" y="548.36" width="56.60" height="8.52" fill="#404040"/>
<path d="M558.00 526.66h52.20" stroke="#8c8c8c" stroke-width="1.5" stroke-dasharray="6.92 4.40"/>
<path d="M558.00 535.18h52.20" stroke="#ffffff" stroke-width="1.25" stroke-dasharray="6.92 4.40"/>
<path d="M558.00 543.70h52.20" stroke="#ffffff" stroke-width="1.25" stroke-dasharray="6.92 4.40"/>
<path d="M558.00 552.22h52.20" stroke="#d0d0d0" stroke-width="1.25" stroke-dasharray="6.92 4.40"/>
<path d="M558.00 560.74h52.20" stroke="#ffffff" stroke-width="1.25" stroke-dasharray="6.92 4.40"/>
<rect x="619.67" y="522.80" width="56.60" height="8.52" fill="#000"/>
<rect x="619.67" y="531.92" width="56.60" height="33.48" fill="#1f6fc2"/>
<rect x="619.67" y="531.92" width="56.60" height="7.92" fill="#10569f"/>
<rect x="619.67" y="548.36" width="56.60" height="8.52" fill="#10569f"/>
<path d="M622.07 526.66h52.20" stroke="#8c8c8c" stroke-width="1.5" stroke-dasharray="6.92 4.40"/>
<path d="M622.07 535.18h52.20" stroke="#ffffff" stroke-width="1.25" stroke-dasharray="6.92 4.40"/>
<path d="M622.07 543.70h52.20" stroke="#ffffff" stroke-width="1.25" stroke-dasharray="6.92 4.40"/>
<path d="M622.07 552.22h52.20" stroke="#d0d0d0" stroke-width="1.25" stroke-dasharray="6.92 4.40"/>
<path d="M622.07 560.74h52.20" stroke="#ffffff" stroke-width="1.25" stroke-dasharray="6.92 4.40"/>
<rect x="683.74" y="522.80" width="56.60" height="8.52" fill="#000"/>
<rect x="683.74" y="531.92" width="56.60" height="33.48" fill="#f5821f"/>
<rect x="683.74" y="531.92" width="56.60" height="7.92" fill="#d9600c"/>
<rect x="683.74" y="548.36" width="56.60" height="8.52" fill="#d9600c"/>
<path d="M686.14 526.66h52.20" stroke="#8c8c8c" stroke-width="1.5" stroke-dasharray="6.92 4.40"/>
<path d="M686.14 535.18h52.20" stroke="#ffffff" stroke-width="1.25" stroke-dasharray="6.92 4.40"/>
<path d="M686.14 543.70h52.20" stroke="#ffffff" stroke-width="1.25" stroke-dasharray="6.92 4.40"/>
<path d="M686.14 552.22h52.20" stroke="#d0d0d0" stroke-width="1.25" stroke-dasharray="6.92 4.40"/>
<path d="M686.14 560.74h52.20" stroke="#ffffff" stroke-width="1.25" stroke-dasharray="6.92 4.40"/>
<rect x="747.81" y="522.80" width="56.60" height="8.52" fill="#000"/>
<rect x="747.81" y="531.92" width="56.60" height="33.48" fill="#a6a6a6"/>
<rect x="747.81" y="531.92" width="56.60" height="7.92" fill="#808080"/>
<rect x="747.81" y="548.36" width="56.60" height="8.52" fill="#808080"/>
<path d="M750.21 526.66h52.20" stroke="#8c8c8c" stroke-width="1.5" stroke-dasharray="6.92 4.40"/>
<path d="M750.21 535.18h52.20" stroke="#ffffff" stroke-width="1.25" stroke-dasharray="6.92 4.40"/>
<path d="M750.21 543.70h52.20" stroke="#ffffff" stroke-width="1.25" stroke-dasharray="6.92 4.40"/>
<path d="M750.21 552.22h52.20" stroke="#d0d0d0" stroke-width="1.25" stroke-dasharray="6.92 4.40"/>
<path d="M750.21 560.74h52.20" stroke="#ffffff" stroke-width="1.25" stroke-dasharray="6.92 4.40"/>
<rect x="811.88" y="522.80" width="56.60" height="8.52" fill="#000"/>
<rect x="811.88" y="531.92" width="56.60" height="33.48" fill="#ffc000"/>
<rect x="811.88" y="531.92" width="56.60" height="7.92" fill="#d39a00"/>
<rect x="811.88" y="548.36" width="56.60" height="8.52" fill="#d39a00"/>
<path d="M814.28 526.66h52.20" stroke="#8c8c8c" stroke-width="1.5" stroke-dasharray="6.92 4.40"/>
<path d="M814.28 535.18h52.20" stroke="#ffffff" stroke-width="1.25" stroke-dasharray="6.92 4.40"/>
<path d="M814.28 543.70h52.20" stroke="#ffffff" stroke-width="1.25" stroke-dasharray="6.92 4.40"/>
<path d="M814.28 552.22h52.20" stroke="#d0d0d0" stroke-width="1.25" stroke-dasharray="6.92 4.40"/>
<path d="M814.28 560.74h52.20" stroke="#ffffff" stroke-width="1.25" stroke-dasharray="6.92 4.40"/>
<rect x="875.95" y="522.80" width="56.60" height="8.52" fill="#000"/>
<rect x="875.95" y="531.92" width="56.60" height="33.48" fill="#2196d6"/>
<rect x="875.95" y="531.92" width="56.60" height="7.92" fill="#1273ae"/>
<rect x="875.95" y="548.36" width="56.60" height="8.52" fill="#1273ae"/>
<path d="M878.35 526.66h52.20" stroke="#8c8c8c" stroke-width="1.5" stroke-dasharray="6.92 4.40"/>
<path d="M878.35 535.18h52.20" stroke="#ffffff" stroke-width="1.25" stroke-dasharray="6.92 4.40"/>
<path d="M878.35 543.70h52.20" stroke="#ffffff" stroke-width="1.25" stroke-dasharray="6.92 4.40"/>
<path d="M878.35 552.22h52.20" stroke="#d0d0d0" stroke-width="1.25" stroke-dasharray="6.92 4.40"/>
<path d="M878.35 560.74h52.20" stroke="#ffffff" stroke-width="1.25" stroke-dasharray="6.92 4.40"/>
<rect x="940.02" y="522.80" width="56.60" height="8.52" fill="#000"/>
<rect x="940.02" y="531.92" width="56.60" height="33.48" fill="#3fa63a"/>
<rect x="940.02" y="531.92" width="56.60" height="7.92" fill="#2b7a29"/>
<rect x="940.02" y="548.36" width="56.60" height="8.52" fill="#2b7a29"/>
<path d="M942.42 526.66h52.20" stroke="#8c8c8c" stroke-width="1.5" stroke-dasharray="6.92 4.40"/>
<path d="M942.42 535.18h52.20" stroke="#ffffff" stroke-width="1.25" stroke-dasharray="6.92 4.40"/>
<path d="M942.42 543.70h52.20" stroke="#ffffff" stroke-width="1.25" stroke-dasharray="6.92 4.40"/>
<path d="M942.42 552.22h52.20" stroke="#d0d0d0" stroke-width="1.25" stroke-dasharray="6.92 4.40"/>
<path d="M942.42 560.74h52.20" stroke="#ffffff" stroke-width="1.25" stroke-dasharray="6.92 4.40"/>
</svg>
<div class="a " style="left:552.00px;top:569.20px;width:449.00px;height:0.90px;background:#e2e2e2;"></div>
<span class="t" id="t144" style="top:575.56px;font-size:11.4px;line-height:13.68px;color:#555;font-family:'Liberation Sans', sans-serif;font-weight:normal;">Создать стиль таблицы...</span>
<span class="t" id="t145" style="top:597.56px;font-size:11.4px;line-height:13.68px;color:#555;font-family:'Liberation Sans', sans-serif;font-weight:normal;">Создать стиль сводной таблицы...</span>
<div class="a " style="left:605.20px;top:587.40px;width:5.60px;height:0.90px;background:#555;"></div>
<div class="a " style="left:582.40px;top:609.60px;width:6.60px;height:0.90px;background:#555;"></div>
<svg class="a" style="left:553.00px;top:572.00px;" width="24" height="44" viewBox="0 0 24 44">
<rect x="4.600" y="5" width="12.200" height="11.400" fill="#fff" stroke="#9a9a9a" stroke-width="1"/>
<rect x="8.600" y="8.800" width="8" height="7.400" fill="#a6d4f2"/>
<path d="M4.600 8.800h12.200M4.600 12.600h12.200M8.600 5v11.400M12.700 5v11.400" stroke="#a2a2a2" stroke-width=".9" fill="none"/>
<path d="M8.600 8.800h8.200M8.600 12.600h8.200M12.700 8.800v7.600" stroke="#e8f3fb" stroke-width=".9" fill="none"/>
<circle cx="6" cy="6" r="2.900" fill="#f9cf9a"/><circle cx="6" cy="6" r="1.500" fill="#f7bd74"/>
<rect x="4.600" y="27.600" width="12.200" height="10.800" fill="#fff" stroke="#8a8a8a" stroke-width="1"/>
<path d="M4.600 27.600h12.200v10.800" stroke="#6a6a6a" stroke-width="1.300" fill="none"/>
<rect x="5.200" y="31.400" width="2.600" height="6.400" fill="#b8b8b8"/><path d="M8.800 29.800h7" stroke="#b8b8b8" stroke-width="1.200"/>
<path d="M10.200 35.800h2.400c1.400 0 1.600-.6 1.600-2v-1.400" stroke="#1f82c8" stroke-width="1.300" fill="none"/><path d="M12.600 33.200l1.600-1.900 1.600 1.900zM11.400 34.200l-1.900 1.600 1.900 1.600z" fill="#1f82c8"/>
<circle cx="5.600" cy="28" r="2.900" fill="#f9cf9a"/><circle cx="5.600" cy="28" r="1.500" fill="#f7bd74"/>
</svg>
<div class="a " style="left:775.20px;top:617.40px;width:1.40px;height:1.40px;background:#8aa0c8;"></div>
<div class="a " style="left:779.80px;top:617.40px;width:1.40px;height:1.40px;background:#8aa0c8;"></div>
<div class="a " style="left:784.40px;top:617.40px;width:1.40px;height:1.40px;background:#8aa0c8;"></div>
<div class="a " style="left:789.00px;top:617.40px;width:1.40px;height:1.40px;background:#8aa0c8;"></div>
<div class="a " style="left:546.00px;top:81.70px;width:187.40px;height:24.20px;border:3.3px solid #fe0000;border-radius:8.5px;"></div>
<div class="a " style="left:549.00px;top:107.00px;width:455.20px;height:467.80px;border:3.3px solid #fe0000;border-radius:10px;"></div>
</body></html>
